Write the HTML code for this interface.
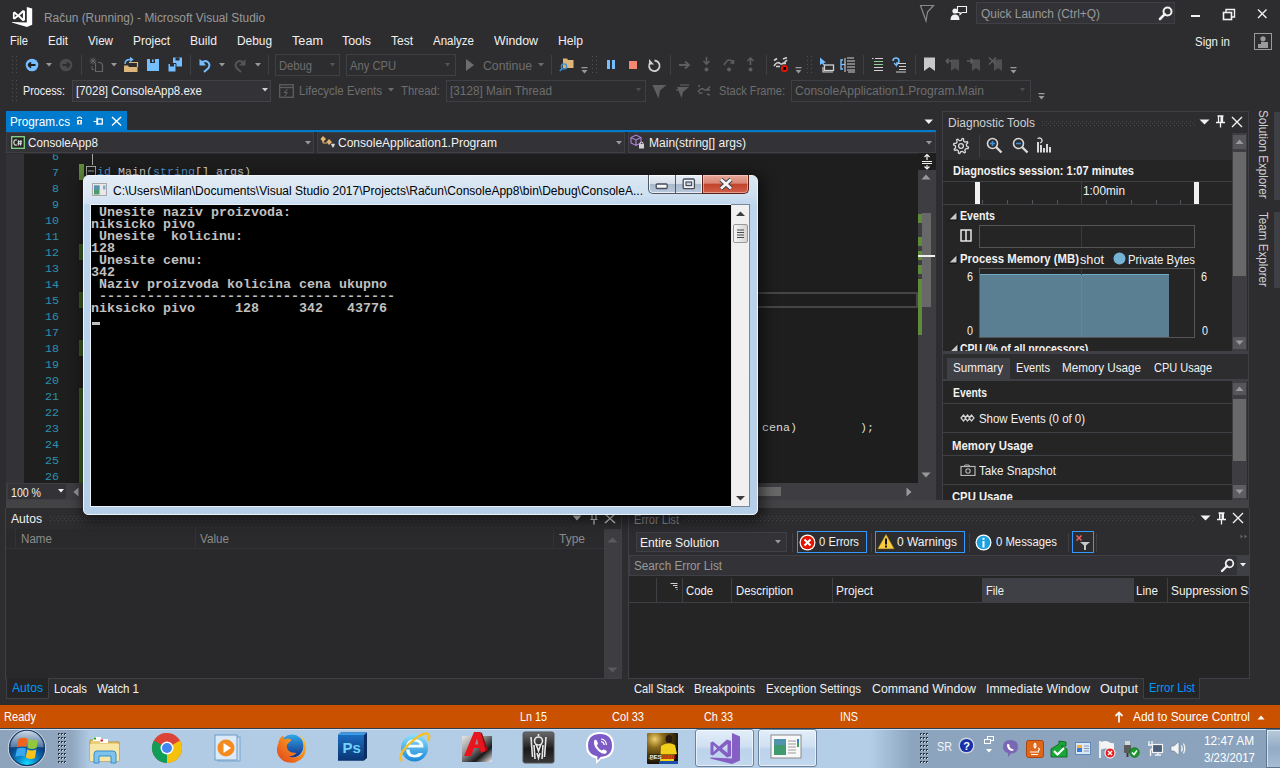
<!DOCTYPE html>
<html><head><meta charset="utf-8"><style>
html,body{margin:0;padding:0;}
body{width:1280px;height:768px;overflow:hidden;position:relative;background:#2d2d30;}
.a{position:absolute;}
.t{position:absolute;white-space:pre;line-height:1;transform-origin:0 0;}
.f{font-family:"Liberation Sans",sans-serif;}
.m{font-family:"Liberation Mono",monospace;}
</style></head><body>
<svg class="a" style="left:0px;top:0px;" width="40" height="30" viewBox="0 0 40 30"><path fill="#fff" d="M26.8,6.9 L32.2,8.5 L32.2,24.8 L27,27 L11.7,22.4 L12.2,21.9 L26.8,22.6 Z"></path><path fill="#fff" fill-rule="evenodd" d="M12.9,12.4 L14.8,11.6 L18.2,14.4 L22.8,10 L25,11 L25,20.2 L22.8,21.2 L18.2,16.8 L14.8,19.6 L12.9,18.8 Z M14.6,14 L14.6,17.2 L16.7,15.6 Z M22.9,12.8 L19.7,15.6 L22.9,18.4 Z"></path></svg>
<div class="t f" style="left: 44px; top: 12.42px; font-size: 12.5px; color: rgb(153, 153, 153); transform: scaleX(0.9505);">Račun (Running) - Microsoft Visual Studio</div>
<svg class="a" style="left:918px;top:3px;" width="18" height="20" viewBox="0 0 18 20"><path d="M2.5,2.5 L15.5,2.5 L9.5,9 L8,18 Z" fill="none" stroke="#8a8a8a" stroke-width="1.2"></path></svg>
<svg class="a" style="left:949px;top:4px;" width="20" height="18" viewBox="0 0 20 18"><circle cx="6" cy="7" r="2.6" fill="#f1f1f1"></circle><path d="M1.5,16 Q1.5,10.5 6,10.5 Q10.5,10.5 10.5,16 Z" fill="#f1f1f1"></path><path d="M8.5,2.5 L17.5,2.5 L17.5,8.5 L13,8.5 L11,10.5 L11,8.5 L8.5,8.5 Z" fill="none" stroke="#f1f1f1" stroke-width="1.1"></path></svg>
<div class="a" style="left:976px;top:2px;width:199px;height:22px;background:#333337;box-sizing:border-box;border:1px solid #3f3f46;"></div>
<div class="t f" style="left: 981px; top: 8.42px; font-size: 12.5px; color: rgb(153, 153, 153); transform: scaleX(0.9543);">Quick Launch (Ctrl+Q)</div>
<svg class="a" style="left:1157px;top:5px;" width="18" height="17" viewBox="0 0 18 17"><circle cx="10.5" cy="6.5" r="4" fill="none" stroke="#f1f1f1" stroke-width="2"></circle><path d="M7.8,9.2 L3,14" stroke="#f1f1f1" stroke-width="2.6" stroke-linecap="round"></path></svg>
<div class="a" style="left:1191px;top:15px;width:9px;height:2px;background:#f1f1f1;"></div>
<svg class="a" style="left:1221px;top:7px;" width="16" height="15" viewBox="0 0 16 15"><rect x="2.5" y="5.5" width="8" height="7" fill="none" stroke="#f1f1f1" stroke-width="1.6"></rect><path d="M5,5 L5,2.5 L13.5,2.5 L13.5,10 L11,10" fill="none" stroke="#f1f1f1" stroke-width="1.4"></path></svg>
<svg class="a" style="left:1256px;top:8px;" width="12" height="12" viewBox="0 0 12 12"><path d="M2,1.5 L10.5,10 M10.5,1.5 L2,10" stroke="#f1f1f1" stroke-width="1.4"></path></svg>
<div class="t f" style="left: 10px; top: 35.42px; font-size: 12.5px; color: rgb(241, 241, 241); transform: scaleX(0.893);">File</div>
<div class="t f" style="left: 48px; top: 35.42px; font-size: 12.5px; color: rgb(241, 241, 241); transform: scaleX(0.9282);">Edit</div>
<div class="t f" style="left: 88px; top: 35.42px; font-size: 12.5px; color: rgb(241, 241, 241); transform: scaleX(0.9302);">View</div>
<div class="t f" style="left: 133px; top: 35.42px; font-size: 12.5px; color: rgb(241, 241, 241); transform: scaleX(0.951);">Project</div>
<div class="t f" style="left: 190px; top: 35.42px; font-size: 12.5px; color: rgb(241, 241, 241); transform: scaleX(0.9713);">Build</div>
<div class="t f" style="left: 237px; top: 35.42px; font-size: 12.5px; color: rgb(241, 241, 241); transform: scaleX(0.95);">Debug</div>
<div class="t f" style="left: 292px; top: 35.42px; font-size: 12.5px; color: rgb(241, 241, 241); transform: scaleX(1.0138);">Team</div>
<div class="t f" style="left: 342px; top: 35.42px; font-size: 12.5px; color: rgb(241, 241, 241); transform: scaleX(0.9936);">Tools</div>
<div class="t f" style="left: 391px; top: 35.42px; font-size: 12.5px; color: rgb(241, 241, 241); transform: scaleX(0.9591);">Test</div>
<div class="t f" style="left: 433px; top: 35.42px; font-size: 12.5px; color: rgb(241, 241, 241); transform: scaleX(0.9217);">Analyze</div>
<div class="t f" style="left: 494px; top: 35.42px; font-size: 12.5px; color: rgb(241, 241, 241); transform: scaleX(0.9895);">Window</div>
<div class="t f" style="left: 558px; top: 35.42px; font-size: 12.5px; color: rgb(241, 241, 241); transform: scaleX(0.9721);">Help</div>
<div class="t f" style="left: 1195px; top: 36.42px; font-size: 12.5px; color: rgb(241, 241, 241); transform: scaleX(0.9154);">Sign in</div>
<div class="a" style="left:1254px;top:33px;width:18px;height:17px;box-sizing:border-box;border:1px solid #9a9a9a;"></div>
<svg class="a" style="left:1254px;top:33px;" width="18" height="17" viewBox="0 0 18 17"><circle cx="9" cy="5.8" r="2.6" fill="#9a9a9a"></circle><rect x="4" y="9" width="10" height="6" fill="#9a9a9a"></rect><rect x="4" y="9" width="3" height="2" fill="#2d2d30"></rect></svg>
<svg class="a" style="left:12px;top:56px;" width="6" height="19" viewBox="0 0 6 19"><rect x="0" y="0" width="1" height="1" fill="#505055"></rect><rect x="4" y="0" width="1" height="1" fill="#505055"></rect><rect x="0" y="4" width="1" height="1" fill="#505055"></rect><rect x="4" y="4" width="1" height="1" fill="#505055"></rect><rect x="0" y="8" width="1" height="1" fill="#505055"></rect><rect x="4" y="8" width="1" height="1" fill="#505055"></rect><rect x="0" y="12" width="1" height="1" fill="#505055"></rect><rect x="4" y="12" width="1" height="1" fill="#505055"></rect><rect x="0" y="16" width="1" height="1" fill="#505055"></rect><rect x="4" y="16" width="1" height="1" fill="#505055"></rect></svg>
<svg class="a" style="left:25px;top:58px;" width="14" height="14" viewBox="0 0 14 14"><circle cx="7" cy="7" r="6.3" fill="#75beff"></circle><path d="M3.2,7 L10.5,7 M3.2,7 L6,4.3 M3.2,7 L6,9.7" stroke="#1e1e1e" stroke-width="1.8" fill="none"></path></svg>
<svg class="a" style="left:46.0px;top:63px;" width="6" height="4" viewBox="0 0 6 4"><path d="M0,0 L6,0 L3.0,3.5 Z" fill="#999999"></path></svg>
<svg class="a" style="left:59px;top:58px;" width="14" height="14" viewBox="0 0 14 14"><circle cx="7" cy="7" r="6.3" fill="#4b4b4e"></circle><path d="M10.8,7 L3.5,7 M10.8,7 L8,4.3 M10.8,7 L8,9.7" stroke="#2d2d30" stroke-width="1.8" fill="none"></path></svg>
<div class="a" style="left:81px;top:55px;width:1px;height:20px;background:#3f3f46;"></div>
<svg class="a" style="left:89px;top:57px;" width="15" height="16" viewBox="0 0 15 16"><path d="M6.5,5.5 L6.5,14.5 L13.5,14.5 L13.5,7.5 L11.5,5.5 L9,5.5" fill="none" stroke="#656565" stroke-width="1.2"></path><path d="M4,0.5 L4,7.5 M0.5,4 L7.5,4 M1.5,1.5 L6.5,6.5 M6.5,1.5 L1.5,6.5" stroke="#656565" stroke-width="1"></path><path d="M3,9 L3,12.5 L5,12.5" fill="none" stroke="#656565" stroke-width="1"></path></svg>
<svg class="a" style="left:111.0px;top:63px;" width="6" height="4" viewBox="0 0 6 4"><path d="M0,0 L6,0 L3.0,3.5 Z" fill="#999999"></path></svg>
<svg class="a" style="left:123px;top:57px;" width="16" height="16" viewBox="0 0 16 16"><path d="M1,8.5 L5,8.5 L6,10 L14.5,10 L14.5,15 L1,15 Z" fill="#dcb67a"></path><path d="M6,5.5 L14.5,5.5 L14.5,10" fill="none" stroke="#dcb67a" stroke-width="1.2"></path><path d="M2,7 Q2,2.5 7,2.5 L9,2.5 M7,0.5 L9.5,2.5 L7,4.5" fill="none" stroke="#75beff" stroke-width="1.4"></path></svg>
<svg class="a" style="left:146px;top:58px;" width="14" height="14" viewBox="0 0 14 14"><path d="M1,1 L13,1 L13,13 L1,13 Z" fill="#75beff"></path><rect x="4" y="1" width="5" height="4" fill="#2d2d30"></rect><rect x="6" y="1.5" width="1.5" height="2.5" fill="#75beff"></rect></svg>
<svg class="a" style="left:167px;top:57px;" width="16" height="16" viewBox="0 0 16 16"><path d="M6,0.5 L15,0.5 L15,9.5 L6,9.5 Z" fill="#75beff"></path><rect x="8.5" y="0.5" width="4" height="3" fill="#2d2d30"></rect><path d="M1,6.5 L9,6.5 L9,15 L1,15 Z" fill="#75beff" stroke="#2d2d30" stroke-width="1"></path><rect x="3" y="6.5" width="4" height="3" fill="#2d2d30"></rect></svg>
<div class="a" style="left:190px;top:55px;width:1px;height:20px;background:#3f3f46;"></div>
<svg class="a" style="left:198px;top:57px;" width="14" height="16" viewBox="0 0 14 16"><path d="M2.5,2.5 L2.5,7.5 L7.5,7.5" fill="#75beff"></path><path d="M3,7 Q6,3 9,4.5 Q13,7 10.5,11 L6,15" fill="none" stroke="#75beff" stroke-width="2"></path><path d="M1.5,2 L1.5,8.5 L8,8.5 Z" fill="#75beff"></path></svg>
<svg class="a" style="left:219.0px;top:63px;" width="6" height="4" viewBox="0 0 6 4"><path d="M0,0 L6,0 L3.0,3.5 Z" fill="#999999"></path></svg>
<svg class="a" style="left:233px;top:57px;" width="14" height="16" viewBox="0 0 14 16"><path d="M11,7 Q8,3 5,4.5 Q1,7 3.5,11 L8,15" fill="none" stroke="#555558" stroke-width="2"></path><path d="M12.5,2 L12.5,8.5 L6,8.5 Z" fill="#555558"></path></svg>
<svg class="a" style="left:255.0px;top:63px;" width="6" height="4" viewBox="0 0 6 4"><path d="M0,0 L6,0 L3.0,3.5 Z" fill="#999999"></path></svg>
<div class="a" style="left:268px;top:55px;width:1px;height:20px;background:#3f3f46;"></div>
<div class="a" style="left:275px;top:54px;width:65px;height:22px;box-sizing:border-box;border:1px solid #3f3f46;"></div>
<div class="t f" style="left: 279px; top: 60.42px; font-size: 12.5px; color: rgb(109, 109, 109); transform: scaleX(0.8957);">Debug</div>
<svg class="a" style="left:329.5px;top:63px;" width="5" height="4" viewBox="0 0 5 4"><path d="M0,0 L5,0 L2.5,3.5 Z" fill="#555555"></path></svg>
<div class="a" style="left:346px;top:54px;width:110px;height:22px;box-sizing:border-box;border:1px solid #3f3f46;"></div>
<div class="t f" style="left: 350px; top: 60.42px; font-size: 12.5px; color: rgb(109, 109, 109); transform: scaleX(0.8948);">Any CPU</div>
<svg class="a" style="left:444.5px;top:63px;" width="5" height="4" viewBox="0 0 5 4"><path d="M0,0 L5,0 L2.5,3.5 Z" fill="#555555"></path></svg>
<svg class="a" style="left:465px;top:58px;" width="10" height="14" viewBox="0 0 10 14"><path d="M1,1 L9,7 L1,13 Z" fill="#6d6d6d"></path></svg>
<div class="t f" style="left: 483px; top: 60.42px; font-size: 12.5px; color: rgb(109, 109, 109); transform: scaleX(0.9791);">Continue</div>
<svg class="a" style="left:538.0px;top:63px;" width="6" height="4" viewBox="0 0 6 4"><path d="M0,0 L6,0 L3.0,3.5 Z" fill="#6d6d6d"></path></svg>
<div class="a" style="left:551px;top:55px;width:1px;height:20px;background:#3f3f46;"></div>
<svg class="a" style="left:559px;top:57px;" width="16" height="16" viewBox="0 0 16 16"><path d="M4,1.5 L8,1.5 L9,3 L14.5,3 L14.5,11 L4,11 Z" fill="#dcb67a"></path><circle cx="5" cy="9.5" r="2.6" fill="none" stroke="#3a8fd6" stroke-width="1.4"></circle><path d="M3.2,11.5 L0.8,14" stroke="#3a8fd6" stroke-width="1.6"></path></svg>
<svg class="a" style="left:581px;top:67px;" width="7" height="7" viewBox="0 0 7 7"><rect x="0.5" y="0" width="6" height="1.3" fill="#999"></rect><path d="M0.5,3 L6.5,3 L3.5,6.5 Z" fill="#999"></path></svg>
<svg class="a" style="left:592px;top:56px;" width="6" height="19" viewBox="0 0 6 19"><rect x="0" y="0" width="1" height="1" fill="#505055"></rect><rect x="4" y="0" width="1" height="1" fill="#505055"></rect><rect x="0" y="4" width="1" height="1" fill="#505055"></rect><rect x="4" y="4" width="1" height="1" fill="#505055"></rect><rect x="0" y="8" width="1" height="1" fill="#505055"></rect><rect x="4" y="8" width="1" height="1" fill="#505055"></rect><rect x="0" y="12" width="1" height="1" fill="#505055"></rect><rect x="4" y="12" width="1" height="1" fill="#505055"></rect><rect x="0" y="16" width="1" height="1" fill="#505055"></rect><rect x="4" y="16" width="1" height="1" fill="#505055"></rect></svg>
<div class="a" style="left:607px;top:60px;width:3px;height:9px;background:#75beff;"></div>
<div class="a" style="left:612px;top:60px;width:3px;height:9px;background:#75beff;"></div>
<div class="a" style="left:629px;top:61px;width:8px;height:8px;background:#f48771;"></div>
<svg class="a" style="left:647px;top:58px;" width="15" height="15" viewBox="0 0 15 15"><path d="M3.2,4.5 A5.3,5.3 0 1 0 7.5,2.5" fill="none" stroke="#d0d0d0" stroke-width="1.8"></path><path d="M2,1 L2,6.5 L7,6.5 Z" fill="#d0d0d0"></path></svg>
<div class="a" style="left:670px;top:55px;width:1px;height:20px;background:#3f3f46;"></div>
<svg class="a" style="left:678px;top:60px;" width="13" height="10" viewBox="0 0 13 10"><path d="M1,5 L11,5 M7,1.5 L11,5 L7,8.5" fill="none" stroke="#5e5e5e" stroke-width="1.8"></path></svg>
<svg class="a" style="left:702px;top:57px;" width="9" height="16" viewBox="0 0 9 16"><path d="M4.5,0 L4.5,7 M1.5,4 L4.5,7 L7.5,4" fill="none" stroke="#5e5e5e" stroke-width="1.6"></path><circle cx="4.5" cy="12.5" r="2" fill="#5e5e5e"></circle></svg>
<svg class="a" style="left:722px;top:57px;" width="14" height="16" viewBox="0 0 14 16"><path d="M2,8 Q7,-1 11.5,6 M8.5,6 L11.5,6 L11.5,3" fill="none" stroke="#5e5e5e" stroke-width="1.6"></path><circle cx="7" cy="12.5" r="2" fill="#5e5e5e"></circle></svg>
<svg class="a" style="left:746px;top:57px;" width="9" height="16" viewBox="0 0 9 16"><path d="M4.5,8 L4.5,1 M1.5,4 L4.5,1 L7.5,4" fill="none" stroke="#5e5e5e" stroke-width="1.6"></path><circle cx="4.5" cy="12.5" r="2" fill="#5e5e5e"></circle></svg>
<div class="a" style="left:766px;top:55px;width:1px;height:20px;background:#3f3f46;"></div>
<svg class="a" style="left:773px;top:57px;" width="16" height="16" viewBox="0 0 16 16"><path d="M1,3.5 L4,1.5 M1,9 Q4,4 7,6.5 Q9,8.5 14,3 M3,9.5 L7,9.5 M9,6.5 L13,6.5 M10,2 L14,0.5" fill="none" stroke="#d0d0d0" stroke-width="1.6"></path><circle cx="11.5" cy="11.5" r="3.6" fill="#e51400"></circle><rect x="10" y="10" width="3" height="3" fill="#000"></rect></svg>
<svg class="a" style="left:795px;top:67px;" width="7" height="7" viewBox="0 0 7 7"><rect x="0.5" y="0" width="6" height="1.3" fill="#999"></rect><path d="M0.5,3 L6.5,3 L3.5,6.5 Z" fill="#999"></path></svg>
<svg class="a" style="left:807px;top:56px;" width="6" height="19" viewBox="0 0 6 19"><rect x="0" y="0" width="1" height="1" fill="#505055"></rect><rect x="4" y="0" width="1" height="1" fill="#505055"></rect><rect x="0" y="4" width="1" height="1" fill="#505055"></rect><rect x="4" y="4" width="1" height="1" fill="#505055"></rect><rect x="0" y="8" width="1" height="1" fill="#505055"></rect><rect x="4" y="8" width="1" height="1" fill="#505055"></rect><rect x="0" y="12" width="1" height="1" fill="#505055"></rect><rect x="4" y="12" width="1" height="1" fill="#505055"></rect><rect x="0" y="16" width="1" height="1" fill="#505055"></rect><rect x="4" y="16" width="1" height="1" fill="#505055"></rect></svg>
<svg class="a" style="left:819px;top:57px;" width="16" height="16" viewBox="0 0 16 16"><path d="M1,0.5 L1,8 L3,6.5 L5,9 L6,8.5 L4.5,6 L7,5.5 Z" fill="#75beff"></path><rect x="5.5" y="8" width="9" height="5.5" fill="none" stroke="#d0d0d0" stroke-width="1.3"></rect><path d="M4,10 L4,15 L14,15" fill="none" stroke="#d0d0d0" stroke-width="1.2"></path></svg>
<svg class="a" style="left:840px;top:57px;" width="16" height="16" viewBox="0 0 16 16"><path d="M3,3 L1,3 L1,12 L3,12" fill="none" stroke="#75beff" stroke-width="1.4"></path><path d="M1,7.5 L5,7.5" stroke="#75beff" stroke-width="1.2"></path><path d="M5,1 L5,15 M7,1 L14,1 M7,4 L15,4 M7,7 L15,7 M7,10 L15,10 M7,13 L15,13 M8,15 L15,15" stroke="#d0d0d0" stroke-width="1.1"></path></svg>
<div class="a" style="left:863px;top:55px;width:1px;height:20px;background:#3f3f46;"></div>
<svg class="a" style="left:872px;top:57px;" width="12" height="16" viewBox="0 0 12 16"><path d="M0,1.5 L1.5,1.5 M3,1.5 L11,1.5 M2,4.5 L11,4.5 M2,10.5 L11,10.5 M2,13.5 L11,13.5" stroke="#d0d0d0" stroke-width="1.2"></path><path d="M2,7.5 L11,7.5 M2,4.5 L11,4.5" stroke="#8ed08e" stroke-width="1.2"></path></svg>
<svg class="a" style="left:892px;top:57px;" width="15" height="16" viewBox="0 0 15 16"><path d="M1,4 Q1,1 4,1 Q7,1 7,4 Q7,6 4.5,8" fill="none" stroke="#75beff" stroke-width="1.6"></path><path d="M2,6 L4.5,8.5 L5,5" fill="none" stroke="#75beff" stroke-width="1.3"></path><path d="M6,6.5 L14,6.5 M7,9.5 L14,9.5 M7,12.5 L14,12.5 M4,15 L14,15" stroke="#d0d0d0" stroke-width="1.2"></path></svg>
<div class="a" style="left:915px;top:55px;width:1px;height:20px;background:#3f3f46;"></div>
<svg class="a" style="left:923px;top:57px;" width="13" height="15" viewBox="0 0 13 15"><path d="M1,0.5 L12,0.5 L12,14 L6.5,10 L1,14 Z" fill="#c8c8c8"></path></svg>
<svg class="a" style="left:945px;top:57px;" width="15" height="15" viewBox="0 0 15 15"><path d="M6,2.5 L14,2.5 L14,14 L10,11 L6,14 Z" fill="#505053"></path><path d="M1,4 L7,4 M1,4 L3.5,1.5 M1,4 L3.5,6.5" fill="none" stroke="#5e5e5e" stroke-width="1.5"></path></svg>
<svg class="a" style="left:966px;top:57px;" width="15" height="15" viewBox="0 0 15 15"><path d="M6,2.5 L14,2.5 L14,14 L10,11 L6,14 Z" fill="#505053"></path><path d="M1,4 L7,4 M7,4 L4.5,1.5 M7,4 L4.5,6.5" fill="none" stroke="#5e5e5e" stroke-width="1.5"></path></svg>
<svg class="a" style="left:988px;top:57px;" width="15" height="15" viewBox="0 0 15 15"><path d="M6,2.5 L14,2.5 L14,14 L10,11 L6,14 Z" fill="#505053"></path><path d="M1,0.5 L8,7.5 M8,0.5 L1,7.5" fill="none" stroke="#5e5e5e" stroke-width="1.4"></path></svg>
<svg class="a" style="left:1010px;top:67px;" width="7" height="7" viewBox="0 0 7 7"><rect x="0.5" y="0" width="6" height="1.3" fill="#999"></rect><path d="M0.5,3 L6.5,3 L3.5,6.5 Z" fill="#999"></path></svg>
<svg class="a" style="left:12px;top:80px;" width="6" height="21" viewBox="0 0 6 21"><rect x="0" y="0" width="1" height="1" fill="#505055"></rect><rect x="4" y="0" width="1" height="1" fill="#505055"></rect><rect x="0" y="4" width="1" height="1" fill="#505055"></rect><rect x="4" y="4" width="1" height="1" fill="#505055"></rect><rect x="0" y="8" width="1" height="1" fill="#505055"></rect><rect x="4" y="8" width="1" height="1" fill="#505055"></rect><rect x="0" y="12" width="1" height="1" fill="#505055"></rect><rect x="4" y="12" width="1" height="1" fill="#505055"></rect><rect x="0" y="16" width="1" height="1" fill="#505055"></rect><rect x="4" y="16" width="1" height="1" fill="#505055"></rect><rect x="0" y="20" width="1" height="1" fill="#505055"></rect><rect x="4" y="20" width="1" height="1" fill="#505055"></rect></svg>
<div class="t f" style="left: 23px; top: 85.42px; font-size: 12.5px; color: rgb(241, 241, 241); transform: scaleX(0.8635);">Process:</div>
<div class="a" style="left:72px;top:80px;width:199px;height:22px;background:#333337;box-sizing:border-box;border:1px solid #434346;"></div>
<div class="t f" style="left: 76px; top: 85.42px; font-size: 12.5px; color: rgb(241, 241, 241); transform: scaleX(0.9202);">[7028] ConsoleApp8.exe</div>
<svg class="a" style="left:261.5px;top:88px;" width="6" height="4" viewBox="0 0 6 4"><path d="M0,0 L6,0 L3.0,3.5 Z" fill="#d0d0d0"></path></svg>
<svg class="a" style="left:279px;top:84px;" width="15" height="14" viewBox="0 0 15 14"><rect x="0.7" y="0.7" width="13.6" height="12.6" fill="none" stroke="#5e5e5e" stroke-width="1.3"></rect><path d="M1,3.5 L14,3.5" stroke="#5e5e5e" stroke-width="1.3"></path><path d="M8.5,5 L5.5,8.5 L8,8.5 L6,12" fill="none" stroke="#5e5e5e" stroke-width="1.1"></path></svg>
<div class="t f" style="left: 299px; top: 85.42px; font-size: 12.5px; color: rgb(109, 109, 109); transform: scaleX(0.9189);">Lifecycle Events</div>
<svg class="a" style="left:388.0px;top:88px;" width="6" height="4" viewBox="0 0 6 4"><path d="M0,0 L6,0 L3.0,3.5 Z" fill="#6d6d6d"></path></svg>
<div class="t f" style="left: 401px; top: 85.42px; font-size: 12.5px; color: rgb(109, 109, 109); transform: scaleX(0.905);">Thread:</div>
<div class="a" style="left:446px;top:80px;width:200px;height:22px;box-sizing:border-box;border:1px solid #3f3f46;"></div>
<div class="t f" style="left: 450px; top: 85.42px; font-size: 12.5px; color: rgb(109, 109, 109); transform: scaleX(0.9428);">[3128] Main Thread</div>
<svg class="a" style="left:636.0px;top:88px;" width="5" height="4" viewBox="0 0 5 4"><path d="M0,0 L5,0 L2.5,3.5 Z" fill="#4d4d4d"></path></svg>
<svg class="a" style="left:652px;top:84px;" width="15" height="15" viewBox="0 0 15 15"><path d="M0.5,1 L14.5,1 L8,6.5 L6.5,14.5 Z" fill="#5e5e5e"></path></svg>
<svg class="a" style="left:675px;top:84px;" width="15" height="15" viewBox="0 0 15 15"><path d="M2,3 L14,3 L8,8 L6.5,14 Z" fill="#5e5e5e"></path><path d="M5,1 L14,1" stroke="#5e5e5e" stroke-width="1.2"></path><path d="M1,6 L7,6" stroke="#5e5e5e" stroke-width="1.2"></path></svg>
<svg class="a" style="left:697px;top:85px;" width="14" height="11" viewBox="0 0 14 11"><path d="M1,1.5 L3,0.5 M1,7 Q4,2 7,4.5 Q9,6.5 13,1.5 M2,8 L5.5,8 M9,5 L13,5 M10,9 L13,10" fill="none" stroke="#5e5e5e" stroke-width="1.6"></path></svg>
<div class="t f" style="left: 719px; top: 85.42px; font-size: 12.5px; color: rgb(109, 109, 109); transform: scaleX(0.888);">Stack Frame:</div>
<div class="a" style="left:791px;top:80px;width:240px;height:22px;box-sizing:border-box;border:1px solid #3f3f46;"></div>
<div class="t f" style="left: 795px; top: 85.42px; font-size: 12.5px; color: rgb(109, 109, 109); transform: scaleX(0.9646);">ConsoleApplication1.Program.Main</div>
<svg class="a" style="left:1020.0px;top:88px;" width="5" height="4" viewBox="0 0 5 4"><path d="M0,0 L5,0 L2.5,3.5 Z" fill="#4d4d4d"></path></svg>
<svg class="a" style="left:1038px;top:93px;" width="7" height="7" viewBox="0 0 7 7"><rect x="0.5" y="0" width="6" height="1.3" fill="#999"></rect><path d="M0.5,3 L6.5,3 L3.5,6.5 Z" fill="#999"></path></svg>
<div class="a" style="left:6px;top:111px;width:121px;height:21px;background:#007acc;"></div>
<div class="a" style="left:6px;top:130px;width:930px;height:2px;background:#007acc;"></div>
<div class="t f" style="left: 10px; top: 116.42px; font-size: 12.5px; color: rgb(255, 255, 255); transform: scaleX(0.9389);">Program.cs</div>
<svg class="a" style="left:76px;top:116px;" width="7" height="9" viewBox="0 0 7 9"><path d="M1.5,3 L1.5,2 Q3.5,0.3 5.5,2 L5.5,3" fill="none" stroke="#f1e6dc" stroke-width="1.2"></path><rect x="1" y="4" width="5" height="4.5" fill="#f1e6dc"></rect><rect x="3" y="5.3" width="1.2" height="2" fill="#1a3a80"></rect></svg>
<svg class="a" style="left:93px;top:117px;" width="10" height="9" viewBox="0 0 10 9"><path d="M0.5,4.5 L4,4.5 M4,0.5 L4,8" stroke="#ffffff" stroke-width="1.2" fill="none"></path><rect x="4.5" y="2" width="4.8" height="5" fill="none" stroke="#ffffff" stroke-width="1.3"></rect></svg>
<svg class="a" style="left:111px;top:116px;" width="12" height="10" viewBox="0 0 12 10"><path d="M1,1 L10,9.5 M10,1 L1,9.5" stroke="#ffffff" stroke-width="1.4"></path></svg>
<svg class="a" style="left:924px;top:119px;" width="10" height="6" viewBox="0 0 10 6"><path d="M0.5,0.5 L9,0.5 L4.75,5 Z" fill="#f1f1f1"></path></svg>
<div class="a" style="left:6px;top:132px;width:930px;height:22px;background:#2d2d30;"></div>
<div class="a" style="left:6px;top:132px;width:308px;height:21px;background:#333337;box-sizing:border-box;border:1px solid #3f3f46;"></div>
<div class="a" style="left:317px;top:132px;width:308px;height:21px;background:#333337;box-sizing:border-box;border:1px solid #3f3f46;"></div>
<div class="a" style="left:628px;top:132px;width:308px;height:21px;background:#333337;box-sizing:border-box;border:1px solid #3f3f46;"></div>
<div class="t f" style="left: 28px; top: 137.42px; font-size: 12.5px; color: rgb(241, 241, 241); transform: scaleX(0.9326);">ConsoleApp8</div>
<svg class="a" style="left:10px;top:135px;" width="16" height="15" viewBox="0 0 16 15"><rect x="1.7" y="1.7" width="12.6" height="11.6" fill="#252526" stroke="#86d886" stroke-width="1.3"></rect><path d="M7,5 Q4,4.3 3.8,7.5 Q4,10.7 7,10" fill="none" stroke="#d8d8d8" stroke-width="1.2"></path><path d="M8.8,5 L8.3,10.5 M11,5 L10.5,10.5 M7.6,6.8 L12,6.8 M7.4,8.8 L11.8,8.8" stroke="#e8e8e8" stroke-width="1"></path></svg>
<svg class="a" style="left:305.0px;top:141px;" width="6" height="4" viewBox="0 0 6 4"><path d="M0,0 L6,0 L3.0,3.5 Z" fill="#999999"></path></svg>
<svg class="a" style="left:320px;top:134px;" width="16" height="16" viewBox="0 0 16 16"><path d="M3,2 L6,5 L3,8 L0.5,5 Z M9,5 L12,8 L9,11 L6.5,8 Z M6,8 L9,11" fill="#e8b56e"></path><path d="M3,5 L3,9 L7,9" fill="none" stroke="#e8b56e" stroke-width="1"></path><path d="M11,10.5 Q12,9 13,10 Q14,9 15,10.5 L13,14 Z" fill="#d8d8d8"></path></svg>
<div class="t f" style="left: 338px; top: 137.42px; font-size: 12.5px; color: rgb(241, 241, 241); transform: scaleX(0.9615);">ConsoleApplication1.Program</div>
<svg class="a" style="left:616.0px;top:141px;" width="6" height="4" viewBox="0 0 6 4"><path d="M0,0 L6,0 L3.0,3.5 Z" fill="#999999"></path></svg>
<svg class="a" style="left:630px;top:134px;" width="16" height="16" viewBox="0 0 16 16"><path d="M6,1 L11,3.5 L11,9 L6,11.5 L1,9 L1,3.5 Z M1,3.5 L6,6 L11,3.5 M6,6 L6,11.5" fill="none" stroke="#b180d7" stroke-width="1.1"></path><rect x="9" y="10" width="5" height="4.5" fill="#d0d0d0"></rect><path d="M10,10 L10,8.8 Q11.5,7.3 13,8.8 L13,10" fill="none" stroke="#d0d0d0" stroke-width="1"></path></svg>
<div class="t f" style="left: 649px; top: 137.42px; font-size: 12.5px; color: rgb(241, 241, 241); transform: scaleX(0.9629);">Main(string[] args)</div>
<svg class="a" style="left:926.0px;top:141px;" width="6" height="4" viewBox="0 0 6 4"><path d="M0,0 L6,0 L3.0,3.5 Z" fill="#999999"></path></svg>
<div class="a" style="left:6px;top:154px;width:18px;height:329px;background:#333337;"></div>
<div class="a" style="left:24px;top:154px;width:894px;height:329px;background:#1e1e1e;"></div>
<div class="a" style="left:0;top:0;width:1280px;height:768px;clip-path:inset(154px 362px 285px 24px);">
<div class="t m" style="left: 52px; top: 150.71px; font-size: 11.6px; color: rgb(43, 145, 175); transform: scaleX(1.0045);">6</div>
<div class="t m" style="left: 52px; top: 166.71px; font-size: 11.6px; color: rgb(43, 145, 175); transform: scaleX(1.0045);">7</div>
<div class="t m" style="left: 52px; top: 182.71px; font-size: 11.6px; color: rgb(43, 145, 175); transform: scaleX(1.0045);">8</div>
<div class="t m" style="left: 52px; top: 198.71px; font-size: 11.6px; color: rgb(43, 145, 175); transform: scaleX(1.0045);">9</div>
<div class="t m" style="left: 45px; top: 214.71px; font-size: 11.6px; color: rgb(43, 145, 175); transform: scaleX(1.0056);">10</div>
<div class="t m" style="left: 45px; top: 230.71px; font-size: 11.6px; color: rgb(43, 145, 175); transform: scaleX(1.0056);">11</div>
<div class="t m" style="left: 45px; top: 246.71px; font-size: 11.6px; color: rgb(43, 145, 175); transform: scaleX(1.0056);">12</div>
<div class="t m" style="left: 45px; top: 262.71px; font-size: 11.6px; color: rgb(43, 145, 175); transform: scaleX(1.0056);">13</div>
<div class="t m" style="left: 45px; top: 278.71px; font-size: 11.6px; color: rgb(43, 145, 175); transform: scaleX(1.0056);">14</div>
<div class="t m" style="left: 45px; top: 294.71px; font-size: 11.6px; color: rgb(43, 145, 175); transform: scaleX(1.0056);">15</div>
<div class="t m" style="left: 45px; top: 310.71px; font-size: 11.6px; color: rgb(43, 145, 175); transform: scaleX(1.0056);">16</div>
<div class="t m" style="left: 45px; top: 326.71px; font-size: 11.6px; color: rgb(43, 145, 175); transform: scaleX(1.0056);">17</div>
<div class="t m" style="left: 45px; top: 342.71px; font-size: 11.6px; color: rgb(43, 145, 175); transform: scaleX(1.0056);">18</div>
<div class="t m" style="left: 45px; top: 358.71px; font-size: 11.6px; color: rgb(43, 145, 175); transform: scaleX(1.0056);">19</div>
<div class="t m" style="left: 45px; top: 374.71px; font-size: 11.6px; color: rgb(43, 145, 175); transform: scaleX(1.0056);">20</div>
<div class="t m" style="left: 45px; top: 390.71px; font-size: 11.6px; color: rgb(43, 145, 175); transform: scaleX(1.0056);">21</div>
<div class="t m" style="left: 45px; top: 406.71px; font-size: 11.6px; color: rgb(43, 145, 175); transform: scaleX(1.0056);">22</div>
<div class="t m" style="left: 45px; top: 422.71px; font-size: 11.6px; color: rgb(43, 145, 175); transform: scaleX(1.0056);">23</div>
<div class="t m" style="left: 45px; top: 438.71px; font-size: 11.6px; color: rgb(43, 145, 175); transform: scaleX(1.0056);">24</div>
<div class="t m" style="left: 45px; top: 454.71px; font-size: 11.6px; color: rgb(43, 145, 175); transform: scaleX(1.0056);">25</div>
<div class="t m" style="left: 45px; top: 470.71px; font-size: 11.6px; color: rgb(43, 145, 175); transform: scaleX(1.0056);">26</div>
<div class="a" style="left:79px;top:164px;width:5px;height:16px;background:#5f8a39;"></div>
<div class="a" style="left:79px;top:244px;width:4px;height:16px;background:#3d5a22;"></div>
<div class="a" style="left:79px;top:292px;width:4px;height:16px;background:#3d5a22;"></div>
<div class="a" style="left:79px;top:340px;width:4px;height:16px;background:#3d5a22;"></div>
<div class="a" style="left:79px;top:388px;width:4px;height:96px;background:#3d5a22;"></div>
<div class="a" style="left:92px;top:153px;width:1px;height:12px;background:#a5a5a5;"></div>
<svg class="a" style="left:86px;top:166px;" width="10" height="10" viewBox="0 0 10 10"><rect x="0.5" y="0.5" width="9" height="9" fill="#1e1e1e" stroke="#a5a5a5" stroke-width="1"></rect><path d="M2,5 L8,5" stroke="#a5a5a5" stroke-width="1"></path></svg>
<div class="t m" style="left:97px;top:167.05px;font-size:11.67px;"><span style="color:#569cd6">id</span><span style="color:#dcdcdc"> Main(</span><span style="color:#569cd6">string</span><span style="color:#dcdcdc">[] args)</span></div>
<div class="a" style="left:86px;top:292px;width:832px;height:16px;box-sizing:border-box;border:2px solid #464646;"></div>
<div class="t m" style="left:762px;top:423.05px;font-size:11.67px;"><span style="color:#dcdcdc">cena)         );</span></div>
</div>
<div class="a" style="left:918px;top:153px;width:18px;height:330px;background:#3e3e42;"></div>
<div class="a" style="left:918px;top:153px;width:18px;height:17px;background:#1e1e1e;"></div>
<svg class="a" style="left:918px;top:153px;" width="18" height="17" viewBox="0 0 18 17"><path d="M4,8.5 L14,8.5 M4,10.5 L14,10.5" stroke="#f1f1f1" stroke-width="1.2"></path><path d="M9,1.5 L9,7 M9,12 L9,16 M6.5,4 L9,1.5 L11.5,4 M6.5,13.5 L9,16 L11.5,13.5" fill="none" stroke="#f1f1f1" stroke-width="1.2"></path></svg>
<svg class="a" style="left:921px;top:174px;" width="10" height="6" viewBox="0 0 10 6"><path d="M0.5,5.5 L9.5,5.5 L5,0.5 Z" fill="#999999"></path></svg>
<div class="a" style="left:922px;top:213px;width:9px;height:94px;background:#686868;"></div>
<div class="a" style="left:918px;top:214px;width:4px;height:9px;background:#5f8a39;"></div>
<div class="a" style="left:918px;top:237px;width:4px;height:9px;background:#5f8a39;"></div>
<div class="a" style="left:918px;top:251px;width:4px;height:9px;background:#5f8a39;"></div>
<div class="a" style="left:918px;top:265px;width:4px;height:9px;background:#5f8a39;"></div>
<div class="a" style="left:918px;top:279px;width:4px;height:56px;background:#5f8a39;"></div>
<div class="a" style="left:918px;top:255px;width:17px;height:2px;background:#f1f1f1;"></div>
<svg class="a" style="left:921px;top:472px;" width="10" height="6" viewBox="0 0 10 6"><path d="M0.5,0.5 L9.5,0.5 L5,5.5 Z" fill="#999999"></path></svg>
<div class="a" style="left:6px;top:483px;width:930px;height:17px;background:#3e3e42;"></div>
<div class="a" style="left:8px;top:484px;width:58px;height:15px;background:#333337;"></div>
<div class="t f" style="left: 11px; top: 486.84px; font-size: 12px; color: rgb(241, 241, 241); transform: scaleX(0.8815);">100 %</div>
<svg class="a" style="left:58.0px;top:489px;" width="6" height="4" viewBox="0 0 6 4"><path d="M0,0 L6,0 L3.0,3.5 Z" fill="#f1f1f1"></path></svg>
<svg class="a" style="left:73px;top:487px;" width="6" height="10" viewBox="0 0 6 10"><path d="M5.5,0.5 L5.5,9.5 L0.5,5 Z" fill="#999999"></path></svg>
<div class="a" style="left:700px;top:487px;width:81px;height:9px;background:#686868;"></div>
<svg class="a" style="left:906px;top:487px;" width="6" height="10" viewBox="0 0 6 10"><path d="M0.5,0.5 L0.5,9.5 L5.5,5 Z" fill="#999999"></path></svg>
<div class="a" style="left:6px;top:500px;width:930px;height:8px;background:#434346;"></div>
<div class="a" style="left:942px;top:111px;width:307px;height:390px;background:#2d2d30;box-sizing:border-box;border:1px solid #3f3f46;"></div>
<div class="t f" style="left: 948px; top: 117.42px; font-size: 12.5px; color: rgb(208, 208, 208); transform: scaleX(0.9582);">Diagnostic Tools</div>
<svg class="a" style="left:1042px;top:121px;" width="153" height="5" viewBox="0 0 153 5"><defs><pattern id="dp1" width="4" height="4" patternUnits="userSpaceOnUse"><rect x="0" y="0" width="1" height="1" fill="#46464a"></rect><rect x="2" y="2" width="1" height="1" fill="#46464a"></rect></pattern></defs><rect width="153" height="5" fill="url(#dp1)"></rect></svg>
<svg class="a" style="left:1199px;top:119px;" width="11" height="7" viewBox="0 0 11 7"><path d="M0.5,0.5 L10.5,0.5 L5.5,5.5 Z" fill="#f1f1f1"></path></svg>
<svg class="a" style="left:1215px;top:115px;" width="11" height="13" viewBox="0 0 11 13"><path d="M2.5,1 L8.5,1 M3.5,1 L3.5,7.5 M7.5,1 L7.5,7.5 M1,7.5 L10,7.5 M5.5,7.5 L5.5,12.5" stroke="#f1f1f1" stroke-width="1.3" fill="none"></path><rect x="5.5" y="1" width="2" height="6.5" fill="#f1f1f1"></rect></svg>
<svg class="a" style="left:1231px;top:116px;" width="12" height="12" viewBox="0 0 12 12"><path d="M1,1 L11,11 M11,1 L1,11" stroke="#f1f1f1" stroke-width="1.4"></path></svg>
<svg class="a" style="left:952px;top:137px;" width="18" height="18" viewBox="0 0 18 18"><path d="M14.60,9.22 L16.51,10.19 L16.13,11.63 L13.99,11.54 L12.80,13.11 L13.47,15.15 L12.18,15.90 L10.73,14.33 L8.78,14.60 L7.81,16.51 L6.37,16.13 L6.46,13.99 L4.89,12.80 L2.85,13.47 L2.10,12.18 L3.67,10.73 L3.40,8.78 L1.49,7.81 L1.87,6.37 L4.01,6.46 L5.20,4.89 L4.53,2.85 L5.82,2.10 L7.27,3.67 L9.22,3.40 L10.19,1.49 L11.63,1.87 L11.54,4.01 L13.11,5.20 L15.15,4.53 L15.90,5.82 L14.33,7.27 Z" fill="none" stroke="#d8d8d8" stroke-width="1.3" stroke-linejoin="round"></path><circle cx="9" cy="9" r="2.4" fill="none" stroke="#d8d8d8" stroke-width="1.3"></circle></svg>
<div class="a" style="left:979px;top:135px;width:1px;height:22px;background:#3f3f46;"></div>
<svg class="a" style="left:986px;top:137px;" width="17" height="17" viewBox="0 0 17 17"><circle cx="6.5" cy="6.5" r="5" fill="#2d2d30" stroke="#d8d8d8" stroke-width="1.6"></circle><path d="M10,10 L15.5,15.5" stroke="#d8d8d8" stroke-width="2.4"></path><path d="M4,6.5 L9,6.5 M6.5,4 L6.5,9" stroke="#3a8fd6" stroke-width="1.6"></path></svg>
<svg class="a" style="left:1012px;top:137px;" width="17" height="17" viewBox="0 0 17 17"><circle cx="6.5" cy="6.5" r="5" fill="#2d2d30" stroke="#d8d8d8" stroke-width="1.6"></circle><path d="M10,10 L15.5,15.5" stroke="#d8d8d8" stroke-width="2.4"></path><path d="M4,6.5 L9,6.5" stroke="#3a8fd6" stroke-width="1.6"></path></svg>
<svg class="a" style="left:1036px;top:137px;" width="17" height="17" viewBox="0 0 17 17"><path d="M2,5 L2,15.5 M5,8 L5,15.5 M8,11 L8,15.5 M11,7 L11,15.5 M14,10 L14,15.5" stroke="#d8d8d8" stroke-width="2"></path><path d="M1.5,1.5 Q5,0 6,3 Q6.5,5 4,6" fill="none" stroke="#d8d8d8" stroke-width="1.3"></path></svg>
<div class="a" style="left:943px;top:160px;width:289px;height:340px;background:#252526;"></div>
<div class="t f" style="left: 953px; top: 165.42px; font-size: 12.5px; color: rgb(241, 241, 241); font-weight: bold; transform: scaleX(0.8832);">Diagnostics session: 1:07 minutes</div>
<div class="a" style="left:943px;top:181px;width:289px;height:1px;background:#3f3f46;"></div>
<div class="a" style="left:943px;top:204px;width:289px;height:1px;background:#3f3f46;"></div>
<div class="a" style="left:1081px;top:182px;width:1px;height:22px;background:#3f3f46;"></div>
<div class="a" style="left:982px;top:200px;width:1px;height:4px;background:#55555a;"></div>
<div class="a" style="left:1007px;top:200px;width:1px;height:4px;background:#55555a;"></div>
<div class="a" style="left:1032px;top:200px;width:1px;height:4px;background:#55555a;"></div>
<div class="a" style="left:1057px;top:200px;width:1px;height:4px;background:#55555a;"></div>
<div class="a" style="left:1106px;top:200px;width:1px;height:4px;background:#55555a;"></div>
<div class="a" style="left:1131px;top:200px;width:1px;height:4px;background:#55555a;"></div>
<div class="a" style="left:1156px;top:200px;width:1px;height:4px;background:#55555a;"></div>
<div class="a" style="left:1180px;top:200px;width:1px;height:4px;background:#55555a;"></div>
<div class="a" style="left:975px;top:182px;width:5px;height:22px;background:#f1f1f1;"></div>
<div class="a" style="left:1194px;top:182px;width:5px;height:22px;background:#f1f1f1;"></div>
<div class="t f" style="left: 1083px; top: 185.42px; font-size: 12.5px; color: rgb(241, 241, 241); transform: scaleX(0.9442);">1:00min</div>
<svg class="a" style="left:948px;top:211px;" width="10" height="10" viewBox="0 0 10 10"><path d="M9,0.5 L9,9 L0.5,9 Z" fill="#c8c8c8" stroke="#0a0a0a" stroke-width="1"></path></svg>
<div class="t f" style="left: 960px; top: 210.42px; font-size: 12.5px; color: rgb(241, 241, 241); font-weight: bold; transform: scaleX(0.8537);">Events</div>
<svg class="a" style="left:960px;top:229px;" width="12" height="13" viewBox="0 0 12 13"><rect x="1" y="1" width="10" height="11" fill="none" stroke="#f1f1f1" stroke-width="1.4"></rect><rect x="5.3" y="1" width="1.4" height="11" fill="#f1f1f1"></rect></svg>
<div class="a" style="left:979px;top:225px;width:216px;height:23px;box-sizing:border-box;border:1px solid #555558;"></div>
<div class="a" style="left:1081px;top:226px;width:1px;height:21px;background:#3a3a3d;"></div>
<svg class="a" style="left:948px;top:254px;" width="10" height="10" viewBox="0 0 10 10"><path d="M9,0.5 L9,9 L0.5,9 Z" fill="#c8c8c8" stroke="#0a0a0a" stroke-width="1"></path></svg>
<div class="t f" style="left: 960px; top: 253.42px; font-size: 12.5px; color: rgb(241, 241, 241); font-weight: bold; transform: scaleX(0.9063);">Process Memory (MB)</div>
<div class="t f" style="left: 1080px; top: 254.42px; font-size: 12.5px; color: rgb(241, 241, 241); transform: scaleX(1.0152);">shot</div>
<svg class="a" style="left:1113px;top:252px;" width="13" height="13" viewBox="0 0 13 13"><circle cx="6.5" cy="6.5" r="6" fill="#75b3d4"></circle></svg>
<div class="t f" style="left: 1128px; top: 254.42px; font-size: 12.5px; color: rgb(241, 241, 241); transform: scaleX(0.9098);">Private Bytes</div>
<div class="a" style="left:979px;top:268px;width:216px;height:70px;box-sizing:border-box;border:1px solid #555558;"></div>
<div class="a" style="left:980px;top:275px;width:189px;height:62px;background:#5a7e92;"></div>
<div class="a" style="left:980px;top:274px;width:189px;height:1px;background:#72a9c6;"></div>
<div class="a" style="left:1081px;top:269px;width:1px;height:6px;background:#3a3a3d;"></div>
<div class="a" style="left:1081px;top:275px;width:1px;height:62px;background:#62879b;"></div>
<div class="t f" style="left: 967px; top: 270.84px; font-size: 12px; color: rgb(241, 241, 241); transform: scaleX(0.8972);">6</div>
<div class="t f" style="left: 1201px; top: 270.84px; font-size: 12px; color: rgb(241, 241, 241); transform: scaleX(0.8972);">6</div>
<div class="t f" style="left: 967px; top: 324.84px; font-size: 12px; color: rgb(241, 241, 241); transform: scaleX(0.8972);">0</div>
<div class="t f" style="left: 1202px; top: 324.84px; font-size: 12px; color: rgb(241, 241, 241); transform: scaleX(0.8972);">0</div>
<div class="a" style="left:943px;top:338px;width:289px;height:13px;overflow:hidden;">
<svg class="a" style="left:6px;top:5px;" width="10" height="10" viewBox="0 0 10 10"><path d="M9,0.5 L9,9 L0.5,9 Z" fill="#c8c8c8" stroke="#0a0a0a" stroke-width="1"></path></svg>
<div class="t f" style="left:17px;top:4.7px;font-size:12.5px;color:#f1f1f1;font-weight:bold;transform:scaleX(0.84)">CPU (% of all processors)</div>
</div>
<div class="a" style="left:1232px;top:133px;width:15px;height:218px;background:#3e3e42;"></div>
<div class="a" style="left:1233px;top:135px;width:13px;height:14px;background:#55555a;"></div>
<svg class="a" style="left:1235px;top:139px;" width="9" height="6" viewBox="0 0 9 6"><path d="M0.5,5 L8.5,5 L4.5,0.5 Z" fill="#999"></path></svg>
<div class="a" style="left:1233px;top:152px;width:13px;height:124px;background:#686868;"></div>
<div class="a" style="left:1233px;top:337px;width:13px;height:12px;background:#55555a;"></div>
<svg class="a" style="left:1235px;top:340px;" width="9" height="6" viewBox="0 0 9 6"><path d="M0.5,0.5 L8.5,0.5 L4.5,5 Z" fill="#999"></path></svg>
<div class="a" style="left:943px;top:351px;width:305px;height:3px;background:#3f3f46;"></div>
<div class="a" style="left:943px;top:354px;width:305px;height:27px;background:#2d2d30;"></div>
<div class="a" style="left:947px;top:358px;width:63px;height:21px;background:#3f3f46;"></div>
<div class="t f" style="left: 953px; top: 362.42px; font-size: 12.5px; color: rgb(241, 241, 241); transform: scaleX(0.9349);">Summary</div>
<div class="t f" style="left: 1016px; top: 362.42px; font-size: 12.5px; color: rgb(241, 241, 241); transform: scaleX(0.8896);">Events</div>
<div class="t f" style="left: 1062px; top: 362.42px; font-size: 12.5px; color: rgb(241, 241, 241); transform: scaleX(0.9322);">Memory Usage</div>
<div class="t f" style="left: 1154px; top: 362.42px; font-size: 12.5px; color: rgb(241, 241, 241); transform: scaleX(0.8788);">CPU Usage</div>
<div class="a" style="left:943px;top:379px;width:305px;height:2px;background:#3f3f46;"></div>
<div class="a" style="left:943px;top:381px;width:289px;height:119px;background:#252526;"></div>
<div class="a" style="left:943px;top:403px;width:289px;height:1px;background:#3f3f46;"></div>
<div class="a" style="left:943px;top:432px;width:289px;height:1px;background:#3f3f46;"></div>
<div class="a" style="left:943px;top:455px;width:289px;height:1px;background:#3f3f46;"></div>
<div class="a" style="left:943px;top:484px;width:289px;height:1px;background:#3f3f46;"></div>
<div class="t f" style="left: 953px; top: 387.42px; font-size: 12.5px; color: rgb(241, 241, 241); font-weight: bold; transform: scaleX(0.8293);">Events</div>
<svg class="a" style="left:960px;top:413px;" width="16" height="10" viewBox="0 0 16 10"><path d="M1,5 L3.5,2 L6,5 L3.5,8 Z M5,5 L7.5,2 L10,5 L7.5,8 Z M9,5 L11.5,2 L14,5 L11.5,8 Z" fill="none" stroke="#d0d0d0" stroke-width="1.2"></path></svg>
<div class="t f" style="left: 979px; top: 413.42px; font-size: 12.5px; color: rgb(241, 241, 241); transform: scaleX(0.9135);">Show Events (0 of 0)</div>
<div class="t f" style="left: 952px; top: 440.42px; font-size: 12.5px; color: rgb(241, 241, 241); font-weight: bold; transform: scaleX(0.9108);">Memory Usage</div>
<svg class="a" style="left:960px;top:464px;" width="16" height="12" viewBox="0 0 16 12"><rect x="1" y="2.5" width="14" height="9" fill="none" stroke="#b8b8b8" stroke-width="1.2"></rect><path d="M4,2.5 L5,1 L9,1 L10,2.5" fill="none" stroke="#b8b8b8" stroke-width="1"></path><circle cx="8" cy="7" r="2.2" fill="none" stroke="#b8b8b8" stroke-width="1.1"></circle></svg>
<div class="t f" style="left: 979px; top: 465.42px; font-size: 12.5px; color: rgb(241, 241, 241); transform: scaleX(0.931);">Take Snapshot</div>
<div class="a" style="left:943px;top:485px;width:289px;height:15px;overflow:hidden;">
<div class="t f" style="left:9px;top:5.5px;font-size:12.5px;color:#f1f1f1;font-weight:bold;transform:scaleX(0.9)">CPU Usage</div>
</div>
<div class="a" style="left:1232px;top:381px;width:15px;height:119px;background:#3e3e42;"></div>
<div class="a" style="left:1233px;top:383px;width:13px;height:12px;background:#55555a;"></div>
<svg class="a" style="left:1235px;top:386px;" width="9" height="6" viewBox="0 0 9 6"><path d="M0.5,5 L8.5,5 L4.5,0.5 Z" fill="#999"></path></svg>
<div class="a" style="left:1233px;top:399px;width:13px;height:62px;background:#686868;"></div>
<div class="a" style="left:1233px;top:485px;width:13px;height:13px;background:#5e5e62;"></div>
<svg class="a" style="left:1235px;top:489px;" width="9" height="6" viewBox="0 0 9 6"><path d="M0.5,0.5 L8.5,0.5 L4.5,5 Z" fill="#999"></path></svg>
<div class="a" style="left:936px;top:500px;width:313px;height:8px;background:#434346;"></div>
<div class="t f" style="left:1269px;top:110px;font-size:12.5px;color:#d0d0d0;transform-origin:0 0;transform:rotate(90deg) scaleX(0.93);">Solution Explorer</div>
<div class="t f" style="left:1269px;top:212px;font-size:12.5px;color:#d0d0d0;transform-origin:0 0;transform:rotate(90deg) scaleX(0.93);">Team Explorer</div>
<div class="a" style="left:1274px;top:112px;width:6px;height:88px;background:#3f3f46;"></div>
<div class="a" style="left:1274px;top:212px;width:6px;height:76px;background:#3f3f46;"></div>
<div class="a" style="left:0px;top:508px;width:1280px;height:197px;background:#2d2d30;"></div>
<div class="a" style="left:6px;top:508px;width:616px;height:171px;background:#2d2d30;"></div>
<div class="t f" style="left: 11px; top: 513.42px; font-size: 12.5px; color: rgb(241, 241, 241); transform: scaleX(0.9697);">Autos</div>
<svg class="a" style="left:50px;top:516px;" width="521" height="5" viewBox="0 0 521 5"><defs><pattern id="dp2" width="4" height="4" patternUnits="userSpaceOnUse"><rect x="0" y="0" width="1" height="1" fill="#46464a"></rect><rect x="2" y="2" width="1" height="1" fill="#46464a"></rect></pattern></defs><rect width="521" height="5" fill="url(#dp2)"></rect></svg>
<svg class="a" style="left:572px;top:515px;" width="10" height="6" viewBox="0 0 10 6"><path d="M0.5,0.5 L9.5,0.5 L5,5.5 Z" fill="#d0d0d0"></path></svg>
<svg class="a" style="left:589px;top:513px;" width="10" height="12" viewBox="0 0 10 12"><path d="M1.5,6.5 L8.5,6.5 M5,6.5 L5,11.5 M3,1 L3,6.5 M7,1 L7,6.5 M2,1 L8,1" stroke="#d0d0d0" stroke-width="1.2" fill="none"></path></svg>
<svg class="a" style="left:604px;top:513px;" width="12" height="11" viewBox="0 0 12 11"><path d="M1,1 L11,10 M11,1 L1,10" stroke="#d0d0d0" stroke-width="1.4"></path></svg>
<div class="a" style="left:6px;top:529px;width:598px;height:149px;background:#29292b;"></div>
<div class="a" style="left:6px;top:529px;width:598px;height:20px;background:#2a2a2c;"></div>
<div class="a" style="left:6px;top:548px;width:598px;height:1px;background:#333337;"></div>
<div class="a" style="left:15px;top:529px;width:1px;height:20px;background:#333337;"></div>
<div class="a" style="left:195px;top:529px;width:1px;height:20px;background:#333337;"></div>
<div class="a" style="left:553px;top:529px;width:1px;height:20px;background:#333337;"></div>
<div class="t f" style="left: 21px; top: 533.42px; font-size: 12.5px; color: rgb(138, 138, 138); transform: scaleX(0.9297);">Name</div>
<div class="t f" style="left: 200px; top: 533.42px; font-size: 12.5px; color: rgb(138, 138, 138); transform: scaleX(0.9341);">Value</div>
<div class="t f" style="left: 559px; top: 533.42px; font-size: 12.5px; color: rgb(138, 138, 138); transform: scaleX(0.9591);">Type</div>
<div class="a" style="left:604px;top:529px;width:17px;height:149px;background:#3e3e42;"></div>
<svg class="a" style="left:607px;top:537px;" width="11" height="6" viewBox="0 0 11 6"><path d="M0.5,5.5 L10.5,5.5 L5.5,0.5 Z" fill="#5a5a5e"></path></svg>
<svg class="a" style="left:607px;top:667px;" width="11" height="6" viewBox="0 0 11 6"><path d="M0.5,0.5 L10.5,0.5 L5.5,5.5 Z" fill="#5a5a5e"></path></svg>
<div class="a" style="left:6px;top:678px;width:616px;height:1px;background:#3f3f46;"></div>
<div class="a" style="left:6px;top:678px;width:43px;height:21px;background:#252526;box-sizing:border-box;border:1px solid #3f3f46;"></div>
<div class="a" style="left:7px;top:678px;width:41px;height:1px;background:#252526;"></div>
<div class="t f" style="left: 12px; top: 682.42px; font-size: 12.5px; color: rgb(0, 151, 251); transform: scaleX(0.9697);">Autos</div>
<div class="t f" style="left: 54px; top: 683.42px; font-size: 12.5px; color: rgb(241, 241, 241); transform: scaleX(0.9131);">Locals</div>
<div class="t f" style="left: 97px; top: 683.42px; font-size: 12.5px; color: rgb(241, 241, 241); transform: scaleX(0.9253);">Watch 1</div>
<div class="a" style="left:5px;top:508px;width:1px;height:171px;background:#3f3f46;"></div>
<div class="a" style="left:621px;top:508px;width:1px;height:171px;background:#3f3f46;"></div>
<div class="a" style="left:628px;top:508px;width:622px;height:171px;background:#2d2d30;"></div>
<div class="a" style="left:628px;top:508px;width:1px;height:171px;background:#3f3f46;"></div>
<div class="a" style="left:1249px;top:508px;width:1px;height:171px;background:#3f3f46;"></div>
<div class="t f" style="left: 634px; top: 514.42px; font-size: 12.5px; color: rgb(138, 138, 138); transform: scaleX(0.8875);">Error List</div>
<svg class="a" style="left:684px;top:516px;" width="511" height="5" viewBox="0 0 511 5"><defs><pattern id="dp3" width="4" height="4" patternUnits="userSpaceOnUse"><rect x="0" y="0" width="1" height="1" fill="#46464a"></rect><rect x="2" y="2" width="1" height="1" fill="#46464a"></rect></pattern></defs><rect width="511" height="5" fill="url(#dp3)"></rect></svg>
<svg class="a" style="left:1200px;top:515px;" width="11" height="6" viewBox="0 0 11 6"><path d="M0.5,0.5 L10.5,0.5 L5.5,5.5 Z" fill="#f1f1f1"></path></svg>
<svg class="a" style="left:1216px;top:512px;" width="11" height="13" viewBox="0 0 11 13"><path d="M2.5,1 L8.5,1 M1,7.5 L10,7.5 M5.5,7.5 L5.5,12.5" stroke="#f1f1f1" stroke-width="1.3" fill="none"></path><rect x="3" y="1" width="5" height="6.5" fill="#f1f1f1"></rect><rect x="4.5" y="2" width="1" height="5" fill="#2d2d30"></rect></svg>
<svg class="a" style="left:1232px;top:512px;" width="12" height="12" viewBox="0 0 12 12"><path d="M1,1 L11,11 M11,1 L1,11" stroke="#f1f1f1" stroke-width="1.4"></path></svg>
<div class="a" style="left:636px;top:532px;width:151px;height:20px;background:#333337;box-sizing:border-box;border:1px solid #3f3f46;"></div>
<div class="t f" style="left: 640px; top: 537.42px; font-size: 12.5px; color: rgb(241, 241, 241); transform: scaleX(0.9716);">Entire Solution</div>
<svg class="a" style="left:775.0px;top:540px;" width="6" height="4" viewBox="0 0 6 4"><path d="M0,0 L6,0 L3.0,3.5 Z" fill="#999999"></path></svg>
<div class="a" style="left:792px;top:533px;width:1px;height:19px;background:#3f3f46;"></div>
<div class="a" style="left:797px;top:531px;width:70px;height:22px;box-sizing:border-box;border:1px solid #3399ff;"></div>
<svg class="a" style="left:799px;top:534px;" width="17" height="17" viewBox="0 0 17 17"><circle cx="8.5" cy="8.5" r="8" fill="#ffffff"></circle><circle cx="8.5" cy="8.5" r="6.8" fill="#e51400"></circle><path d="M5.5,5.5 L11.5,11.5 M11.5,5.5 L5.5,11.5" stroke="#fff" stroke-width="2"></path></svg>
<div class="t f" style="left: 819px; top: 536.42px; font-size: 12.5px; color: rgb(241, 241, 241); transform: scaleX(0.8998);">0 Errors</div>
<div class="a" style="left:871px;top:533px;width:1px;height:19px;background:#3f3f46;"></div>
<div class="a" style="left:875px;top:531px;width:90px;height:22px;box-sizing:border-box;border:1px solid #3399ff;"></div>
<svg class="a" style="left:877px;top:533px;" width="18" height="17" viewBox="0 0 18 17"><path d="M9,1 L17.5,16 L0.5,16 Z" fill="#f7cd3f" stroke="#5a4a10" stroke-width="0.6"></path><rect x="8" y="5.5" width="2" height="6" fill="#111"></rect><rect x="8" y="12.5" width="2" height="2" fill="#111"></rect></svg>
<div class="t f" style="left: 897px; top: 536.42px; font-size: 12.5px; color: rgb(241, 241, 241); transform: scaleX(0.9559);">0 Warnings</div>
<div class="a" style="left:969px;top:533px;width:1px;height:19px;background:#3f3f46;"></div>
<svg class="a" style="left:975px;top:534px;" width="17" height="17" viewBox="0 0 17 17"><circle cx="8.5" cy="8.5" r="8" fill="#ffffff"></circle><circle cx="8.5" cy="8.5" r="6.8" fill="#1ba1e2"></circle><rect x="7.5" y="7" width="2" height="6.5" fill="#fff"></rect><rect x="7.5" y="3.8" width="2" height="2" fill="#fff"></rect></svg>
<div class="t f" style="left: 996px; top: 536.42px; font-size: 12.5px; color: rgb(241, 241, 241); transform: scaleX(0.905);">0 Messages</div>
<div class="a" style="left:1068px;top:533px;width:1px;height:19px;background:#3f3f46;"></div>
<div class="a" style="left:1072px;top:531px;width:22px;height:22px;box-sizing:border-box;border:1px solid #3399ff;"></div>
<svg class="a" style="left:1075px;top:534px;" width="17" height="17" viewBox="0 0 17 17"><path d="M1.5,1.5 L6.5,6.5 M6.5,1.5 L1.5,6.5" stroke="#e86060" stroke-width="1.6"></path><path d="M5,8 L15,8 L11,11.5 L11,16 L9,16 L9,11.5 Z" fill="#c8c8c8"></path></svg>
<div class="a" style="left:1096px;top:533px;width:1px;height:19px;background:#3f3f46;"></div>
<svg class="a" style="left:1240px;top:534px;" width="8" height="6" viewBox="0 0 8 6"><path d="M0.5,0.5 L3,2.5 L0.5,4.5 Z M4.5,0.5 L7,2.5 L4.5,4.5 Z" fill="#666"></path></svg>
<div class="a" style="left:629px;top:555px;width:620px;height:21px;background:#333337;box-sizing:border-box;border:1px solid #3f3f46;"></div>
<div class="t f" style="left: 634px; top: 560.42px; font-size: 12.5px; color: rgb(153, 153, 153); transform: scaleX(0.9384);">Search Error List</div>
<svg class="a" style="left:1220px;top:558px;" width="15" height="15" viewBox="0 0 15 15"><circle cx="9.5" cy="5.5" r="3.8" fill="none" stroke="#f1f1f1" stroke-width="1.8"></circle><path d="M7,8 L2,13" stroke="#f1f1f1" stroke-width="2.4" stroke-linecap="round"></path></svg>
<div class="a" style="left:1237px;top:556px;width:12px;height:19px;background:#3f3f46;"></div>
<svg class="a" style="left:1240.0px;top:563px;" width="6" height="4" viewBox="0 0 6 4"><path d="M0,0 L6,0 L3.0,3.5 Z" fill="#f1f1f1"></path></svg>
<div class="a" style="left:629px;top:576px;width:620px;height:102px;background:#252526;"></div>
<div class="a" style="left:629px;top:578px;width:620px;height:24px;background:#252526;"></div>
<div class="a" style="left:629px;top:602px;width:620px;height:1px;background:#3f3f46;"></div>
<div class="a" style="left:982px;top:578px;width:151px;height:24px;background:#3f3f46;"></div>
<div class="a" style="left:656px;top:578px;width:1px;height:24px;background:#3f3f46;"></div>
<div class="a" style="left:682px;top:578px;width:1px;height:24px;background:#3f3f46;"></div>
<div class="a" style="left:731px;top:578px;width:1px;height:24px;background:#3f3f46;"></div>
<div class="a" style="left:832px;top:578px;width:1px;height:24px;background:#3f3f46;"></div>
<div class="a" style="left:982px;top:578px;width:1px;height:24px;background:#3f3f46;"></div>
<div class="a" style="left:1133px;top:578px;width:1px;height:24px;background:#3f3f46;"></div>
<div class="a" style="left:1167px;top:578px;width:1px;height:24px;background:#3f3f46;"></div>
<svg class="a" style="left:670px;top:583px;" width="8" height="8" viewBox="0 0 8 8"><path d="M0.5,0.5 L7.5,0.5 M3,2.5 L7.5,2.5 M5,4.5 L7.5,4.5 M6.5,6.5 L7.5,6.5" stroke="#d0d0d0" stroke-width="1"></path></svg>
<div class="t f" style="left: 686px; top: 585.42px; font-size: 12.5px; color: rgb(241, 241, 241); transform: scaleX(0.9033);">Code</div>
<div class="t f" style="left: 736px; top: 585.42px; font-size: 12.5px; color: rgb(241, 241, 241); transform: scaleX(0.9115);">Description</div>
<div class="t f" style="left: 836px; top: 585.42px; font-size: 12.5px; color: rgb(241, 241, 241); transform: scaleX(0.951);">Project</div>
<div class="t f" style="left: 986px; top: 585.42px; font-size: 12.5px; color: rgb(241, 241, 241); transform: scaleX(0.893);">File</div>
<div class="t f" style="left: 1136px; top: 585.42px; font-size: 12.5px; color: rgb(241, 241, 241); transform: scaleX(0.9306);">Line</div>
<div class="a" style="left:1168px;top:578px;width:81px;height:24px;overflow:hidden;">
<div class="t f" style="left:3px;top:6.7px;font-size:12.5px;color:#f1f1f1;transform:scaleX(0.95)">Suppression State</div>
</div>
<div class="a" style="left:628px;top:678px;width:622px;height:1px;background:#3f3f46;"></div>
<div class="t f" style="left: 634px; top: 683.42px; font-size: 12.5px; color: rgb(241, 241, 241); transform: scaleX(0.8884);">Call Stack</div>
<div class="t f" style="left: 694px; top: 683.42px; font-size: 12.5px; color: rgb(241, 241, 241); transform: scaleX(0.924);">Breakpoints</div>
<div class="t f" style="left: 766px; top: 683.42px; font-size: 12.5px; color: rgb(241, 241, 241); transform: scaleX(0.9175);">Exception Settings</div>
<div class="t f" style="left: 872px; top: 683.42px; font-size: 12.5px; color: rgb(241, 241, 241); transform: scaleX(0.9849);">Command Window</div>
<div class="t f" style="left: 986px; top: 683.42px; font-size: 12.5px; color: rgb(241, 241, 241); transform: scaleX(0.9784);">Immediate Window</div>
<div class="t f" style="left: 1100px; top: 683.42px; font-size: 12.5px; color: rgb(241, 241, 241); transform: scaleX(1.0125);">Output</div>
<div class="a" style="left:1143px;top:678px;width:57px;height:21px;background:#252526;box-sizing:border-box;border:1px solid #3f3f46;"></div>
<div class="a" style="left:1144px;top:678px;width:55px;height:1px;background:#252526;"></div>
<div class="t f" style="left: 1149px; top: 682.42px; font-size: 12.5px; color: rgb(0, 151, 251); transform: scaleX(0.9072);">Error List</div>
<div class="a" style="left:0px;top:705px;width:1280px;height:23px;background:#ca5100;"></div>
<div class="t f" style="left: 4px; top: 711.42px; font-size: 12.5px; color: rgb(255, 255, 255); transform: scaleX(0.8854);">Ready</div>
<div class="t f" style="left: 520px; top: 711.42px; font-size: 12.5px; color: rgb(255, 255, 255); transform: scaleX(0.8631);">Ln 15</div>
<div class="t f" style="left: 612px; top: 711.42px; font-size: 12.5px; color: rgb(255, 255, 255); transform: scaleX(0.8854);">Col 33</div>
<div class="t f" style="left: 704px; top: 711.42px; font-size: 12.5px; color: rgb(255, 255, 255); transform: scaleX(0.8693);">Ch 33</div>
<div class="t f" style="left: 840px; top: 711.42px; font-size: 12.5px; color: rgb(255, 255, 255); transform: scaleX(0.8636);">INS</div>
<svg class="a" style="left:1114px;top:711px;" width="10" height="12" viewBox="0 0 10 12"><path d="M5,1.5 L5,11.5 M1.5,5 L5,1.5 L8.5,5" stroke="#f1f1f1" stroke-width="1.8" fill="none"></path></svg>
<div class="t f" style="left: 1133px; top: 711.42px; font-size: 12.5px; color: rgb(255, 255, 255); transform: scaleX(0.9512);">Add to Source Control</div>
<svg class="a" style="left:1257px;top:715px;" width="8" height="5" viewBox="0 0 8 5"><path d="M0.5,4.5 L7.5,4.5 L4,0.5 Z" fill="#ffffff"></path></svg>
<div class="a" style="left:0px;top:728px;width:1280px;height:40px;background:linear-gradient(90deg,#8ca3bb 0px,#90a7bf 72px,#b2cbe5 90px,#b5cee8 870px,#a6bfd9 885px,#8ca4bd 912px,#8aa2bb 1280px);"></div>
<div class="a" style="left:0px;top:728px;width:1280px;height:1px;background:#2b3f55;"></div>
<div class="a" style="left:0px;top:729px;width:1280px;height:1px;background:#d6e2ee;"></div>
<svg class="a" style="left:7px;top:728px;" width="40" height="40" viewBox="0 0 40 40"><defs><radialGradient id="orb" cx="50%" cy="95%" r="70%"><stop offset="0" stop-color="#12e0ff"></stop><stop offset="0.35" stop-color="#0b8ed0"></stop><stop offset="0.75" stop-color="#0a4f92"></stop><stop offset="1" stop-color="#0a3466"></stop></radialGradient><linearGradient id="orbt" x1="0" y1="0" x2="0" y2="1"><stop offset="0" stop-color="#dfe8f0"></stop><stop offset="1" stop-color="#5a7ea6"></stop></linearGradient></defs><circle cx="20" cy="20" r="18.6" fill="none" stroke="rgba(255,255,255,0.55)" stroke-width="1.2"></circle><circle cx="20" cy="20" r="17.6" fill="url(#orb)" stroke="#173d6a" stroke-width="1.2"></circle><path d="M3.3,19.5 A16.7,16.7 0 0 1 36.7,19.5 Q20,17.5 3.3,19.5 Z" fill="url(#orbt)" opacity="0.9"></path><path d="M11.5,11 Q15,9 20.5,10.5 L19.2,19 Q15,17.5 10.2,19.5 Z" fill="#f0641e"></path><path d="M21.7,11 Q26,13 31,11.5 L29.5,20 Q25,22 20.5,20 Z" fill="#92c83e"></path><path d="M10,20.8 Q14.5,18.8 19,20.5 L17.7,28.5 Q13,27 8.3,29 Z" fill="#3aa8ee"></path><path d="M20.3,21.5 Q25,23.5 29.3,21.5 L28,30 Q23,32 18.8,29.5 Z" fill="#fcc21c"></path></svg>
<svg class="a" style="left:58px;top:733px;" width="9" height="32" viewBox="0 0 9 32"><rect x="0" y="0" width="2" height="2" fill="#2a3440"></rect><rect x="1" y="1" width="1" height="1" fill="#e8eef5"></rect><rect x="3" y="0" width="2" height="2" fill="#2a3440"></rect><rect x="4" y="1" width="1" height="1" fill="#e8eef5"></rect><rect x="6" y="0" width="2" height="2" fill="#2a3440"></rect><rect x="7" y="1" width="1" height="1" fill="#e8eef5"></rect><rect x="0" y="4" width="2" height="2" fill="#2a3440"></rect><rect x="1" y="5" width="1" height="1" fill="#e8eef5"></rect><rect x="3" y="4" width="2" height="2" fill="#2a3440"></rect><rect x="4" y="5" width="1" height="1" fill="#e8eef5"></rect><rect x="6" y="4" width="2" height="2" fill="#2a3440"></rect><rect x="7" y="5" width="1" height="1" fill="#e8eef5"></rect><rect x="0" y="8" width="2" height="2" fill="#2a3440"></rect><rect x="1" y="9" width="1" height="1" fill="#e8eef5"></rect><rect x="3" y="8" width="2" height="2" fill="#2a3440"></rect><rect x="4" y="9" width="1" height="1" fill="#e8eef5"></rect><rect x="6" y="8" width="2" height="2" fill="#2a3440"></rect><rect x="7" y="9" width="1" height="1" fill="#e8eef5"></rect><rect x="0" y="12" width="2" height="2" fill="#2a3440"></rect><rect x="1" y="13" width="1" height="1" fill="#e8eef5"></rect><rect x="3" y="12" width="2" height="2" fill="#2a3440"></rect><rect x="4" y="13" width="1" height="1" fill="#e8eef5"></rect><rect x="6" y="12" width="2" height="2" fill="#2a3440"></rect><rect x="7" y="13" width="1" height="1" fill="#e8eef5"></rect><rect x="0" y="16" width="2" height="2" fill="#2a3440"></rect><rect x="1" y="17" width="1" height="1" fill="#e8eef5"></rect><rect x="3" y="16" width="2" height="2" fill="#2a3440"></rect><rect x="4" y="17" width="1" height="1" fill="#e8eef5"></rect><rect x="6" y="16" width="2" height="2" fill="#2a3440"></rect><rect x="7" y="17" width="1" height="1" fill="#e8eef5"></rect><rect x="0" y="20" width="2" height="2" fill="#2a3440"></rect><rect x="1" y="21" width="1" height="1" fill="#e8eef5"></rect><rect x="3" y="20" width="2" height="2" fill="#2a3440"></rect><rect x="4" y="21" width="1" height="1" fill="#e8eef5"></rect><rect x="6" y="20" width="2" height="2" fill="#2a3440"></rect><rect x="7" y="21" width="1" height="1" fill="#e8eef5"></rect><rect x="0" y="24" width="2" height="2" fill="#2a3440"></rect><rect x="1" y="25" width="1" height="1" fill="#e8eef5"></rect><rect x="3" y="24" width="2" height="2" fill="#2a3440"></rect><rect x="4" y="25" width="1" height="1" fill="#e8eef5"></rect><rect x="6" y="24" width="2" height="2" fill="#2a3440"></rect><rect x="7" y="25" width="1" height="1" fill="#e8eef5"></rect><rect x="0" y="28" width="2" height="2" fill="#2a3440"></rect><rect x="1" y="29" width="1" height="1" fill="#e8eef5"></rect><rect x="3" y="28" width="2" height="2" fill="#2a3440"></rect><rect x="4" y="29" width="1" height="1" fill="#e8eef5"></rect><rect x="6" y="28" width="2" height="2" fill="#2a3440"></rect><rect x="7" y="29" width="1" height="1" fill="#e8eef5"></rect></svg>
<svg class="a" style="left:88px;top:734px;" width="34" height="31" viewBox="0 0 34 31"><path d="M2,6 L12,6 L14,8 L31,8 L31,27 L2,27 Z" fill="#e9cf7a" stroke="#b9953a" stroke-width="1"></path><path d="M2,10 L31,10 L31,27 L2,27 Z" fill="#f7e6a6"></path><rect x="5" y="3" width="8" height="4" fill="#fff"></rect><rect x="5.5" y="3.5" width="2.5" height="2" fill="#1aa81a"></rect><rect x="12" y="5" width="8" height="4" fill="#fff"></rect><rect x="12.5" y="5.5" width="2.5" height="2" fill="#d0281c"></rect><path d="M6,29 L6,20 Q6,17 9,17 L25,17 Q28,17 28,20 L28,29 L23,29 L23,22 L11,22 L11,29 Z" fill="#7cc4ee" stroke="#3a8cc8" stroke-width="1"></path></svg>
<svg class="a" style="left:151px;top:732px;" width="32" height="32" viewBox="0 0 32 32"><circle cx="16" cy="16" r="15" fill="#db4437"></circle><path d="M16,16 L29,8.5 A15,15 0 0 1 16,31 Z" fill="#f4c20d"></path><path d="M16,16 L16,31 A15,15 0 0 1 3,8.5 Z" fill="#0f9d58"></path><path d="M16,16 L3,8.5 A15,15 0 0 1 16,1 Z" fill="#db4437"></path><circle cx="16" cy="16" r="6.5" fill="#fff"></circle><circle cx="16" cy="16" r="5" fill="#4285f4"></circle></svg>
<svg class="a" style="left:213px;top:734px;" width="30" height="30" viewBox="0 0 30 30"><rect x="5" y="3" width="22" height="24" fill="#c6dcf0" stroke="#7aa6cc" stroke-width="1"></rect><rect x="2" y="1" width="22" height="25" fill="#dbeaf8" stroke="#6a9cc8" stroke-width="1"></rect><circle cx="13" cy="14" r="8.5" fill="#f58a1f"></circle><path d="M10.5,9 L18,14 L10.5,19 Z" fill="#fff"></path></svg>
<svg class="a" style="left:275px;top:732px;" width="32" height="32" viewBox="0 0 32 32"><defs><linearGradient id="ffg" x1="0" y1="0" x2="0" y2="1"><stop offset="0" stop-color="#2fa8e8"></stop><stop offset="1" stop-color="#12308a"></stop></linearGradient><linearGradient id="ffo" x1="1" y1="0" x2="0" y2="1"><stop offset="0" stop-color="#ffd83a"></stop><stop offset="0.35" stop-color="#f7931e"></stop><stop offset="1" stop-color="#e0401c"></stop></linearGradient></defs><circle cx="17" cy="14" r="11.5" fill="url(#ffg)"></circle><path d="M3.5,11 Q4,6 8,3.5 L9.5,7.5 Q13,5.5 16.5,8 L14,10.5 Q11,12.5 12,16 Q13,19.5 17,20.5 L21.5,21 Q19,24 14,24.5 Q21,27.5 26.5,22 Q30,17 28,9 Q26,5 23,3 Q31,6 31,16 Q31,27 20,30.5 Q8,32.5 3,23 Q0.5,17 3.5,11 Z" fill="url(#ffo)"></path></svg>
<svg class="a" style="left:336px;top:731px;" width="34" height="32" viewBox="0 0 34 32"><defs><linearGradient id="psg" x1="0" y1="0" x2="0" y2="1"><stop offset="0" stop-color="#1b6cc0"></stop><stop offset="1" stop-color="#0a3574"></stop></linearGradient></defs><path d="M2,4 L5,1.5 L31,1.5 L31,27 L28,29.5 L2,29.5 Z" fill="#0a2e62"></path><path d="M5,1.5 L31,1.5 L28,4 L2,4 Z" fill="#3a9ae8"></path><rect x="2" y="4" width="26" height="25.5" fill="url(#psg)"></rect><text x="6.5" y="22" font-family="Liberation Sans" font-size="15" font-weight="bold" fill="#6fd3fb">Ps</text></svg>
<svg class="a" style="left:398px;top:731px;" width="34" height="33" viewBox="0 0 34 33"><defs><linearGradient id="ieg" x1="0" y1="0" x2="0" y2="1"><stop offset="0" stop-color="#8de0fb"></stop><stop offset="1" stop-color="#1a86d6"></stop></linearGradient></defs><circle cx="16.5" cy="17" r="13.5" fill="url(#ieg)"></circle><path d="M8,16.5 L25.5,16.5 Q25.5,8 16.5,8 Q8,8 8,16.5 Z M11.5,13.8 Q12.5,10.5 16.5,10.5 Q20.5,10.5 21.8,13.8 Z" fill="#f2fbff" fill-rule="evenodd"></path><path d="M8,18.5 Q8.5,26.5 17,26.5 Q22.5,26.5 25,22 L20.5,22 Q19,23.8 16.8,23.8 Q11.8,23.8 11.5,18.5 Z" fill="#f2fbff"></path><path d="M4,30 Q-1,26 9,15 Q22,2 29,2.5 Q33,4 30,10" fill="none" stroke="#f5c12a" stroke-width="2.4"></path></svg>
<svg class="a" style="left:460px;top:731px;" width="34" height="32" viewBox="0 0 34 32"><defs><linearGradient id="acg" x1="0" y1="0" x2="1" y2="1"><stop offset="0" stop-color="#e8e8e8"></stop><stop offset="0.4" stop-color="#8a8a8a"></stop><stop offset="0.7" stop-color="#1a1a1a"></stop><stop offset="1" stop-color="#f4f4f4"></stop></linearGradient></defs><rect x="2" y="5" width="30" height="26" fill="url(#acg)"></rect><path d="M4,25 L14,1 L20,1 L26,20 L21,22 L19.5,17 L14,17 L11,25 Z M15,13.5 L18.5,13.5 L17,7.5 Z" fill="#e8141e" fill-rule="evenodd"></path><path d="M20,1 L22,2 L28,19 L26,20 Z" fill="#9a0a10"></path></svg>
<svg class="a" style="left:522px;top:731px;" width="34" height="33" viewBox="0 0 34 33"><defs><linearGradient id="gmg" x1="0" y1="0" x2="0" y2="1"><stop offset="0" stop-color="#6a6a6a"></stop><stop offset="0.45" stop-color="#2a2a2a"></stop><stop offset="0.55" stop-color="#1a1a1a"></stop><stop offset="1" stop-color="#3a3a3a"></stop></linearGradient></defs><rect x="1" y="1" width="31" height="31" rx="2" fill="url(#gmg)" stroke="#555" stroke-width="1"></rect><circle cx="16.5" cy="10" r="4" fill="none" stroke="#e8e8e8" stroke-width="1.6"></circle><path d="M16.5,3 L16.5,5 M9,6 L10.5,26 M24,6 L22.5,26 M12,14 L13,28 M21,14 L20,28 M14,13 L16.5,20 L19,13 M15,22 L16.5,27 L18,22" fill="none" stroke="#e8e8e8" stroke-width="1.6"></path></svg>
<svg class="a" style="left:584px;top:731px;" width="32" height="34" viewBox="0 0 32 34"><path d="M16,1 Q30,1 30,15 Q30,27 17,28 L12,33 L12,27.5 Q2,25 2,15 Q2,1 16,1 Z" fill="#fff"></path><path d="M16,3 Q28,3 28,15 Q28,25 16.5,26 L13.5,29.5 L13.5,25.5 Q4,23.5 4,15 Q4,3 16,3 Z" fill="#7d5bc6"></path><path d="M10.5,9 Q12,8 13,10 L14,12.5 Q13.5,14 12.8,14.4 Q14.5,18 18,19.5 Q19,18.3 20,18.4 L22.5,19.8 Q23.5,21 22,22.2 Q19.5,24 15,20.5 Q10,16 10,12 Q10,10 10.5,9 Z" fill="#fff"></path><path d="M17,8 Q22,8.5 22.5,14 M17,10.5 Q20,11 20.2,14" fill="none" stroke="#fff" stroke-width="1.2"></path></svg>
<svg class="a" style="left:646px;top:732px;" width="34" height="33" viewBox="0 0 34 33"><defs><radialGradient id="pesg" cx="25%" cy="20%" r="80%"><stop offset="0" stop-color="#f0d070"></stop><stop offset="0.35" stop-color="#8a6a18"></stop><stop offset="1" stop-color="#141008"></stop></radialGradient></defs><rect x="1" y="1" width="31" height="31" rx="1" fill="url(#pesg)"></rect><ellipse cx="23" cy="7" rx="3.5" ry="4" fill="#2a1a10"></ellipse><path d="M14,30 L15,14 Q22,9 29,13 L31,22 L28,23 L28,32 L14,32 Z" fill="#f2d01a"></path><path d="M2,26 L9,24 L13,26 L5,28 Z" fill="#c8a060"></path><rect x="3" y="22" width="28" height="5" fill="rgba(0,0,0,0.45)"></rect><text x="3.5" y="26.5" font-family="Liberation Sans" font-size="6" font-weight="bold" fill="#e8e8e8">PES</text><text x="16" y="26.5" font-family="Liberation Sans" font-size="6" font-weight="bold" fill="#e81818">2016</text><rect x="13" y="29" width="19" height="3" fill="#1a50a8"></rect></svg>
<div class="a" style="left:695px;top:729px;width:59px;height:38px;box-sizing:border-box;border:1px solid #6d8299;border-radius:3px;background:linear-gradient(180deg,#e3eef9 0%,#cfe0f2 45%,#bcd3ec 55%,#c3d8ee 100%);box-shadow:inset 0 0 0 1px rgba(255,255,255,0.6);"></div>
<div class="a" style="left:758px;top:729px;width:59px;height:38px;box-sizing:border-box;border:1px solid #6d8299;border-radius:3px;background:linear-gradient(180deg,#e3eef9 0%,#cfe0f2 45%,#bcd3ec 55%,#c3d8ee 100%);box-shadow:inset 0 0 0 1px rgba(255,255,255,0.6);"></div>
<svg class="a" style="left:708px;top:732px;" width="34" height="33" viewBox="0 0 34 33"><path d="M24,1 L32,4.5 L32,28.5 L24,32 L2,26.5 L3,25.5 L24,26.5 Z" fill="#865fc5"></path><path d="M2.5,10.5 L5,9.5 L11,14.5 L19,7.5 L23,9 L23,24 L19,25.5 L11,18.5 L5,23.5 L2.5,22.5 Z M5.5,13 L5.5,20 L9,16.5 Z M19.5,12 L14,16.5 L19.5,21 Z" fill="#865fc5" fill-rule="evenodd"></path></svg>
<svg class="a" style="left:770px;top:734px;" width="32" height="25" viewBox="0 0 32 25"><rect x="1" y="1" width="30" height="23" fill="#f8f8f8" stroke="#8a8a8a" stroke-width="1"></rect><rect x="4" y="5" width="12" height="16" fill="#3f9a6e"></rect><rect x="4" y="5" width="12" height="6" fill="#5a8fc8" opacity="0.7"></rect><path d="M18,7 L26,7 M18,10 L26,10 M18,13 L26,13 M18,16 L26,16 M18,19 L26,19" stroke="#9a9a9a" stroke-width="1"></path><rect x="27" y="5" width="2" height="8" fill="#3a7fd0"></rect><rect x="27" y="9" width="2" height="4" fill="#3fa05a"></rect></svg>
<svg class="a" style="left:920px;top:733px;" width="9" height="32" viewBox="0 0 9 32"><rect x="0" y="0" width="2" height="2" fill="#2a3440"></rect><rect x="1" y="1" width="1" height="1" fill="#e8eef5"></rect><rect x="3" y="0" width="2" height="2" fill="#2a3440"></rect><rect x="4" y="1" width="1" height="1" fill="#e8eef5"></rect><rect x="6" y="0" width="2" height="2" fill="#2a3440"></rect><rect x="7" y="1" width="1" height="1" fill="#e8eef5"></rect><rect x="0" y="4" width="2" height="2" fill="#2a3440"></rect><rect x="1" y="5" width="1" height="1" fill="#e8eef5"></rect><rect x="3" y="4" width="2" height="2" fill="#2a3440"></rect><rect x="4" y="5" width="1" height="1" fill="#e8eef5"></rect><rect x="6" y="4" width="2" height="2" fill="#2a3440"></rect><rect x="7" y="5" width="1" height="1" fill="#e8eef5"></rect><rect x="0" y="8" width="2" height="2" fill="#2a3440"></rect><rect x="1" y="9" width="1" height="1" fill="#e8eef5"></rect><rect x="3" y="8" width="2" height="2" fill="#2a3440"></rect><rect x="4" y="9" width="1" height="1" fill="#e8eef5"></rect><rect x="6" y="8" width="2" height="2" fill="#2a3440"></rect><rect x="7" y="9" width="1" height="1" fill="#e8eef5"></rect><rect x="0" y="12" width="2" height="2" fill="#2a3440"></rect><rect x="1" y="13" width="1" height="1" fill="#e8eef5"></rect><rect x="3" y="12" width="2" height="2" fill="#2a3440"></rect><rect x="4" y="13" width="1" height="1" fill="#e8eef5"></rect><rect x="6" y="12" width="2" height="2" fill="#2a3440"></rect><rect x="7" y="13" width="1" height="1" fill="#e8eef5"></rect><rect x="0" y="16" width="2" height="2" fill="#2a3440"></rect><rect x="1" y="17" width="1" height="1" fill="#e8eef5"></rect><rect x="3" y="16" width="2" height="2" fill="#2a3440"></rect><rect x="4" y="17" width="1" height="1" fill="#e8eef5"></rect><rect x="6" y="16" width="2" height="2" fill="#2a3440"></rect><rect x="7" y="17" width="1" height="1" fill="#e8eef5"></rect><rect x="0" y="20" width="2" height="2" fill="#2a3440"></rect><rect x="1" y="21" width="1" height="1" fill="#e8eef5"></rect><rect x="3" y="20" width="2" height="2" fill="#2a3440"></rect><rect x="4" y="21" width="1" height="1" fill="#e8eef5"></rect><rect x="6" y="20" width="2" height="2" fill="#2a3440"></rect><rect x="7" y="21" width="1" height="1" fill="#e8eef5"></rect><rect x="0" y="24" width="2" height="2" fill="#2a3440"></rect><rect x="1" y="25" width="1" height="1" fill="#e8eef5"></rect><rect x="3" y="24" width="2" height="2" fill="#2a3440"></rect><rect x="4" y="25" width="1" height="1" fill="#e8eef5"></rect><rect x="6" y="24" width="2" height="2" fill="#2a3440"></rect><rect x="7" y="25" width="1" height="1" fill="#e8eef5"></rect><rect x="0" y="28" width="2" height="2" fill="#2a3440"></rect><rect x="1" y="29" width="1" height="1" fill="#e8eef5"></rect><rect x="3" y="28" width="2" height="2" fill="#2a3440"></rect><rect x="4" y="29" width="1" height="1" fill="#e8eef5"></rect><rect x="6" y="28" width="2" height="2" fill="#2a3440"></rect><rect x="7" y="29" width="1" height="1" fill="#e8eef5"></rect></svg>
<div class="t f" style="left: 937px; top: 740.84px; font-size: 12px; color: rgb(244, 244, 244); transform: scaleX(0.8997);">SR</div>
<svg class="a" style="left:958px;top:737px;" width="17" height="17" viewBox="0 0 17 17"><circle cx="8.5" cy="8.5" r="8" fill="#d0d4dc"></circle><circle cx="8.5" cy="8.5" r="6.6" fill="#1530a8"></circle><text x="5.2" y="12.8" font-family="Liberation Sans" font-size="11" font-weight="bold" fill="#fff">?</text></svg>
<svg class="a" style="left:984px;top:736px;" width="11" height="18" viewBox="0 0 11 18"><rect x="3.5" y="0.5" width="6" height="4" fill="none" stroke="#fff" stroke-width="1"></rect><rect x="0.5" y="3.5" width="6" height="4" fill="#8aa2bb" stroke="#fff" stroke-width="1"></rect><path d="M2,13 L8,13 L5,16.5 Z" fill="#fff"></path></svg>
<svg class="a" style="left:1002px;top:739px;" width="17" height="19" viewBox="0 0 17 19"><path d="M8.5,1 Q16,1 16,8 Q16,14 9,14.5 L6,18 L6,14 Q1,13 1,8 Q1,1 8.5,1 Z" fill="#7b68b5"></path><path d="M5.5,5 Q7,4.5 7.5,6 L7.5,7.5 Q8.5,9.5 10,10 L11.5,10.3 Q12,12 10,12 Q5,11 5,6 Z" fill="#fff"></path></svg>
<svg class="a" style="left:1026px;top:740px;" width="18" height="18" viewBox="0 0 18 18"><rect x="0.5" y="0.5" width="17" height="17" rx="2" fill="#e0661a" stroke="#a94510" stroke-width="1"></rect><path d="M4,12 L13,12 M5,14.5 L12,14.5 M9,3 Q7,6 9,8 Q11,6 9,3 M12,8 Q15,9 12,11" fill="none" stroke="#fff" stroke-width="1.2"></path></svg>
<svg class="a" style="left:1050px;top:740px;" width="18" height="18" viewBox="0 0 18 18"><path d="M1,9 L9,4 L9,1 L16,2 L16,6 L11,6 L17,9 L17,17 L1,17 Z" fill="#18a838" stroke="#0a5a18" stroke-width="0.8"></path><path d="M4,11 L7.5,14.5 L14,8" fill="none" stroke="#fff" stroke-width="2.2"></path></svg>
<svg class="a" style="left:1075px;top:742px;" width="16" height="13" viewBox="0 0 16 13"><rect x="0.5" y="0.5" width="15" height="12" fill="#dbe8f5" stroke="#5a8ac0" stroke-width="1"></rect><rect x="2" y="3" width="5" height="7" fill="#f0b04a"></rect><rect x="2" y="6" width="5" height="4" fill="#3a7ad0"></rect><path d="M9,4 L14,4 M9,6.5 L14,6.5 M9,9 L14,9" stroke="#8a9ab0" stroke-width="1"></path></svg>
<svg class="a" style="left:1098px;top:740px;" width="18" height="19" viewBox="0 0 18 19"><path d="M2,1 L2,18" stroke="#f4f4f4" stroke-width="1.8"></path><path d="M3,2 Q8,0 11,2 Q14,4 16,3 L16,10 Q13,11 11,9.5 Q8,7.5 3,9.5 Z" fill="#f4f4f4"></path><circle cx="12" cy="13" r="5" fill="#e52020" stroke="#fff" stroke-width="1"></circle><path d="M10,11 L14,15 M14,11 L10,15" stroke="#fff" stroke-width="1.4"></path></svg>
<svg class="a" style="left:1122px;top:740px;" width="18" height="18" viewBox="0 0 18 18"><rect x="3" y="1" width="5" height="4" fill="#d8d8d8"></rect><rect x="2" y="5" width="7" height="8" rx="1" fill="#5a5a5a"></rect><rect x="4.5" y="13" width="2" height="4" fill="#3a3a3a"></rect><circle cx="12.5" cy="12.5" r="4.8" fill="#1a9a2a" stroke="#0a5a10" stroke-width="0.6"></circle><path d="M10,12.5 L12,14.5 L15,10.5" fill="none" stroke="#fff" stroke-width="1.5"></path></svg>
<svg class="a" style="left:1146px;top:740px;" width="18" height="17" viewBox="0 0 18 17"><path d="M3,1 L3,5 M6,1 L6,5 M2,5 L7,5 L7,8 L4.5,10 L4.5,16" fill="none" stroke="#f4f4f4" stroke-width="1.3"></path><rect x="6.5" y="4.5" width="10" height="8" fill="#4a6078" stroke="#f4f4f4" stroke-width="1.2"></rect><path d="M9,15 L15,15 M12,12.5 L12,15" stroke="#f4f4f4" stroke-width="1.3"></path></svg>
<svg class="a" style="left:1170px;top:740px;" width="18" height="17" viewBox="0 0 18 17"><path d="M1,6 L4,6 L9,1.5 L9,15.5 L4,11 L1,11 Z" fill="#f4f4f4" stroke="#6a7a8a" stroke-width="0.6"></path><path d="M11.5,5.5 Q13,8.5 11.5,11.5 M13.5,3.5 Q16,8.5 13.5,13.5" fill="none" stroke="#f4f4f4" stroke-width="1.2"></path></svg>
<div class="t f" style="left: 1204px; top: 735.42px; font-size: 12.5px; color: rgb(255, 255, 255); transform: scaleX(0.9465);">12:47 AM</div>
<div class="t f" style="left: 1204px; top: 752.42px; font-size: 12.5px; color: rgb(255, 255, 255); transform: scaleX(0.9171);">3/23/2017</div>
<div class="a" style="left:1266px;top:729px;width:14px;height:39px;box-sizing:border-box;border:1px solid #5e7690;border-right:none;background:linear-gradient(180deg,#b8cadc,#93abc4 50%,#a6bdd4);box-shadow:inset 1px 1px 0 rgba(255,255,255,0.6);"></div>
<div class="a" style="left:83px;top:175px;width:675px;height:340px;border-radius:6px 6px 5px 5px;box-shadow:2px 3px 14px 3px rgba(0,0,0,0.55);"></div>
<div class="a" style="left:83px;top:175px;width:675px;height:340px;box-sizing:border-box;border-radius:6px 6px 5px 5px;border:1px solid #eef4fa;background:linear-gradient(180deg,#dbe7f3 0px,#cddff0 20px,#bcd4ec 30px,#b5cfe9 100%);"></div>
<div class="a" style="left:84px;top:176px;width:560px;height:28px;background:linear-gradient(90deg,rgba(255,255,255,0.25),rgba(255,255,255,0.0));"></div>
<div class="a" style="left:90px;top:204px;width:660px;height:303px;box-sizing:border-box;border:1px solid #e9f0f7;"></div>
<div class="a" style="left:91px;top:205px;width:641px;height:301px;background:#000000;"></div>
<svg class="a" style="left:92px;top:183px;" width="16" height="14" viewBox="0 0 16 14"><rect x="0.5" y="0.5" width="14" height="12" fill="#e8e8e8" stroke="#a8a8a8" stroke-width="1"></rect><rect x="2" y="2.5" width="5.5" height="9" fill="#4a9d6a"></rect><rect x="2" y="2.5" width="5.5" height="4" fill="#5b8fc4" opacity="0.8"></rect><rect x="11" y="2.5" width="2.5" height="4" fill="#7ab0d8"></rect></svg>
<div class="t f" style="left: 113px; top: 185.42px; font-size: 12.5px; color: rgb(0, 0, 0); transform: scaleX(0.9611);">C:\Users\Milan\Documents\Visual Studio 2017\Projects\Račun\ConsoleApp8\bin\Debug\ConsoleA...</div>
<div class="a" style="left:648px;top:175px;width:55px;height:19px;box-sizing:border-box;border:1px solid #4f5867;border-top:none;border-radius:0 0 0 5px;background:linear-gradient(180deg,#e8eef6 0%,#d5dee9 48%,#a9b9cc 50%,#b9c8dc 100%);box-shadow:inset 0 0 0 1px rgba(255,255,255,0.7);"></div>
<div class="a" style="left:675px;top:175px;width:1px;height:18px;background:#4f5867;"></div>
<div class="a" style="left:702px;top:175px;width:47px;height:19px;box-sizing:border-box;border:1px solid #5a2016;border-top:none;border-radius:0 0 5px 0;background:linear-gradient(180deg,#e9a99c 0%,#d98675 45%,#c2452c 52%,#d0604a 100%);box-shadow:inset 0 0 0 1px rgba(255,220,210,0.5);"></div>
<svg class="a" style="left:655px;top:183px;" width="14" height="7" viewBox="0 0 14 7"><rect x="1.2" y="1" width="11" height="4.5" rx="1" fill="#f4f4f4" stroke="#464e5c" stroke-width="1.3"></rect></svg>
<svg class="a" style="left:682px;top:178px;" width="14" height="12" viewBox="0 0 14 12"><rect x="1.2" y="1" width="11.2" height="9.6" rx="1.2" fill="#f4f4f4" stroke="#464e5c" stroke-width="1.3"></rect><rect x="4" y="4" width="5.6" height="3.6" fill="#c4d2e2" stroke="#464e5c" stroke-width="1.2"></rect></svg>
<svg class="a" style="left:718px;top:177px;" width="16" height="14" viewBox="0 0 16 14"><path d="M3,2.5 L13,11.5 M13,2.5 L3,11.5" stroke="#3a3f4a" stroke-width="4.6"></path><path d="M3,2.5 L13,11.5 M13,2.5 L3,11.5" stroke="#f4f4f4" stroke-width="2.8"></path></svg>
<div class="a" style="left:731px;top:204px;width:19px;height:303px;background:#f0f0f0;box-sizing:border-box;border:1px solid #76889a;"></div>
<div class="a" style="left:731px;top:205px;width:1px;height:301px;background:#e6e6e6;"></div>
<svg class="a" style="left:735px;top:210px;" width="11" height="7" viewBox="0 0 11 7"><path d="M1,6 L5.5,1.5 L10,6 Z" fill="#3c3c3c"></path></svg>
<div class="a" style="left:733px;top:224px;width:15px;height:19px;box-sizing:border-box;border:1px solid #9a9a9a;border-radius:2px;background:linear-gradient(90deg,#f4f4f4,#e2e2e2 60%,#d4d4d4);"></div>
<svg class="a" style="left:736px;top:228px;" width="9" height="11" viewBox="0 0 9 11"><path d="M1,2 L8,2 M1,4.5 L8,4.5 M1,7 L8,7 M1,9.5 L8,9.5" stroke="#4a4a4a" stroke-width="1"></path></svg>
<svg class="a" style="left:735px;top:495px;" width="11" height="7" viewBox="0 0 11 7"><path d="M1,1 L5.5,5.5 L10,1 Z" fill="#3c3c3c"></path></svg>
<div class="t m" style="left:91px;top:207.4px;font-size:13.33px;line-height:12px;height:12px;color:#c0c0c0;font-weight:bold;"> Unesite naziv proizvoda:</div>
<div class="t m" style="left:91px;top:219.4px;font-size:13.33px;line-height:12px;height:12px;color:#c0c0c0;font-weight:bold;">niksicko pivo</div>
<div class="t m" style="left:91px;top:231.4px;font-size:13.33px;line-height:12px;height:12px;color:#c0c0c0;font-weight:bold;"> Unesite  kolicinu:</div>
<div class="t m" style="left:91px;top:243.4px;font-size:13.33px;line-height:12px;height:12px;color:#c0c0c0;font-weight:bold;">128</div>
<div class="t m" style="left:91px;top:255.4px;font-size:13.33px;line-height:12px;height:12px;color:#c0c0c0;font-weight:bold;"> Unesite cenu:</div>
<div class="t m" style="left:91px;top:267.4px;font-size:13.33px;line-height:12px;height:12px;color:#c0c0c0;font-weight:bold;">342</div>
<div class="t m" style="left:91px;top:279.4px;font-size:13.33px;line-height:12px;height:12px;color:#c0c0c0;font-weight:bold;"> Naziv proizvoda kolicina cena ukupno</div>
<div class="t m" style="left:91px;top:291.4px;font-size:13.33px;line-height:12px;height:12px;color:#c0c0c0;font-weight:bold;"> -------------------------------------</div>
<div class="t m" style="left:91px;top:303.4px;font-size:13.33px;line-height:12px;height:12px;color:#c0c0c0;font-weight:bold;">niksicko pivo     128     342   43776</div>
<div class="a" style="left:92px;top:322px;width:8px;height:3px;background:#c0c0c0;"></div>
</body></html>
